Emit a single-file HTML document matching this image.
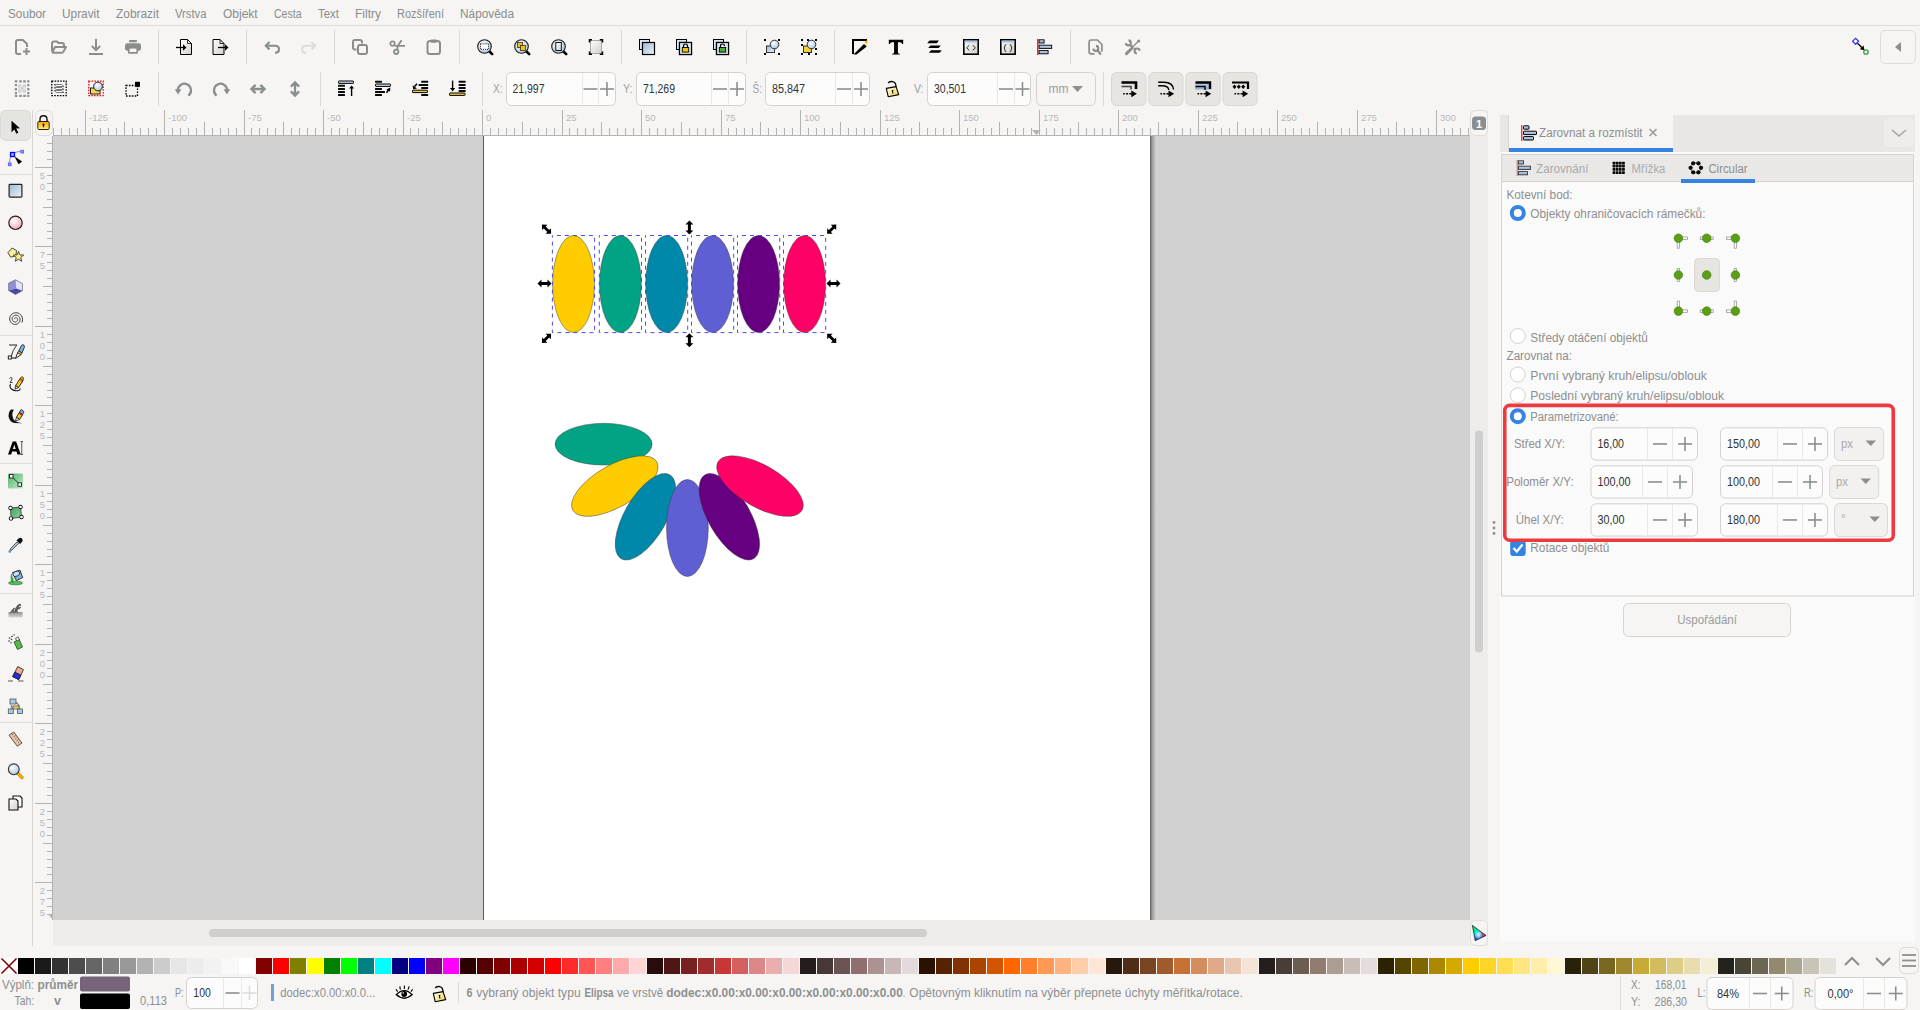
<!DOCTYPE html><html><head><meta charset="utf-8"><style>html,body{margin:0;padding:0;width:1920px;height:1010px;overflow:hidden;background:#f6f5f4}svg{display:block;font-family:"Liberation Sans",sans-serif}text{white-space:pre}</style></head><body><svg width="1920" height="1010" viewBox="0 0 1920 1010"><rect x="0" y="0" width="1920" height="1010" fill="#f6f5f4" />
<text x="8" y="18" font-size="12" fill="#8a8c8c" textLength="38" lengthAdjust="spacingAndGlyphs" >Soubor</text>
<text x="62" y="18" font-size="12" fill="#8a8c8c" textLength="37.5" lengthAdjust="spacingAndGlyphs" >Upravit</text>
<text x="116" y="18" font-size="12" fill="#8a8c8c" textLength="43" lengthAdjust="spacingAndGlyphs" >Zobrazit</text>
<text x="175" y="18" font-size="12" fill="#8a8c8c" textLength="31.5" lengthAdjust="spacingAndGlyphs" >Vrstva</text>
<text x="223" y="18" font-size="12" fill="#8a8c8c" >Objekt</text>
<text x="274" y="18" font-size="12" fill="#8a8c8c" textLength="27.5" lengthAdjust="spacingAndGlyphs" >Cesta</text>
<text x="318" y="18" font-size="12" fill="#8a8c8c" textLength="21" lengthAdjust="spacingAndGlyphs" >Text</text>
<text x="355" y="18" font-size="12" fill="#8a8c8c" >Filtry</text>
<text x="397" y="18" font-size="12" fill="#8a8c8c" textLength="47" lengthAdjust="spacingAndGlyphs" >Rozšíření</text>
<text x="460" y="18" font-size="12" fill="#8a8c8c" textLength="54" lengthAdjust="spacingAndGlyphs" >Nápověda</text>
<line x1="0" y1="25.5" x2="1920" y2="25.5" stroke="#dedbd7" stroke-width="1" />
<rect x="53" y="136" width="1417" height="784" fill="#d1d1d1" />
<rect x="484" y="136" width="666" height="784" fill="#ffffff" />
<line x1="483.5" y1="136" x2="483.5" y2="920" stroke="#5a5a5a" stroke-width="1" />
<defs><linearGradient id="shd" x1="0" x2="1" y1="0" y2="0"><stop offset="0" stop-color="#5c5c5c"/><stop offset="0.35" stop-color="#9a9a9a"/><stop offset="1" stop-color="#d1d1d1"/></linearGradient></defs>
<rect x="1150" y="136" width="6" height="784" fill="url(#shd)" />
<rect x="1470" y="110" width="18" height="836" fill="#eeedeb" />
<rect x="53" y="920" width="1417" height="26" fill="#eeedeb" />
<rect x="209" y="929" width="718" height="8" fill="#cfcfcf" rx="4" />
<rect x="1475" y="430.5" width="8" height="222" fill="#cfcfcf" rx="4" />
<rect x="53" y="110" width="1417" height="26" fill="#f6f5f4" />
<line x1="53" y1="135.5" x2="1470" y2="135.5" stroke="#b3b3b3" stroke-width="1" />
<line x1="53.5" y1="128" x2="53.5" y2="135" stroke="#b3b3b3" stroke-width="1" />
<line x1="61.5" y1="128" x2="61.5" y2="135" stroke="#b3b3b3" stroke-width="1" />
<line x1="69.5" y1="128" x2="69.5" y2="135" stroke="#b3b3b3" stroke-width="1" />
<line x1="77.5" y1="128" x2="77.5" y2="135" stroke="#b3b3b3" stroke-width="1" />
<line x1="85.5" y1="110" x2="85.5" y2="135" stroke="#b3b3b3" stroke-width="1" />
<text x="89.0" y="121" font-size="9.5" fill="#b8b8b8" >-125</text>
<line x1="92.5" y1="128" x2="92.5" y2="135" stroke="#b3b3b3" stroke-width="1" />
<line x1="100.5" y1="128" x2="100.5" y2="135" stroke="#b3b3b3" stroke-width="1" />
<line x1="108.5" y1="128" x2="108.5" y2="135" stroke="#b3b3b3" stroke-width="1" />
<line x1="116.5" y1="128" x2="116.5" y2="135" stroke="#b3b3b3" stroke-width="1" />
<line x1="124.5" y1="122" x2="124.5" y2="135" stroke="#b3b3b3" stroke-width="1" />
<line x1="132.5" y1="128" x2="132.5" y2="135" stroke="#b3b3b3" stroke-width="1" />
<line x1="140.5" y1="128" x2="140.5" y2="135" stroke="#b3b3b3" stroke-width="1" />
<line x1="148.5" y1="128" x2="148.5" y2="135" stroke="#b3b3b3" stroke-width="1" />
<line x1="156.5" y1="128" x2="156.5" y2="135" stroke="#b3b3b3" stroke-width="1" />
<line x1="164.5" y1="110" x2="164.5" y2="135" stroke="#b3b3b3" stroke-width="1" />
<text x="168.0" y="121" font-size="9.5" fill="#b8b8b8" >-100</text>
<line x1="172.5" y1="128" x2="172.5" y2="135" stroke="#b3b3b3" stroke-width="1" />
<line x1="180.5" y1="128" x2="180.5" y2="135" stroke="#b3b3b3" stroke-width="1" />
<line x1="188.5" y1="128" x2="188.5" y2="135" stroke="#b3b3b3" stroke-width="1" />
<line x1="196.5" y1="128" x2="196.5" y2="135" stroke="#b3b3b3" stroke-width="1" />
<line x1="204.5" y1="122" x2="204.5" y2="135" stroke="#b3b3b3" stroke-width="1" />
<line x1="212.5" y1="128" x2="212.5" y2="135" stroke="#b3b3b3" stroke-width="1" />
<line x1="220.5" y1="128" x2="220.5" y2="135" stroke="#b3b3b3" stroke-width="1" />
<line x1="228.5" y1="128" x2="228.5" y2="135" stroke="#b3b3b3" stroke-width="1" />
<line x1="236.5" y1="128" x2="236.5" y2="135" stroke="#b3b3b3" stroke-width="1" />
<line x1="244.5" y1="110" x2="244.5" y2="135" stroke="#b3b3b3" stroke-width="1" />
<text x="248.0" y="121" font-size="9.5" fill="#b8b8b8" >-75</text>
<line x1="251.5" y1="128" x2="251.5" y2="135" stroke="#b3b3b3" stroke-width="1" />
<line x1="259.5" y1="128" x2="259.5" y2="135" stroke="#b3b3b3" stroke-width="1" />
<line x1="267.5" y1="128" x2="267.5" y2="135" stroke="#b3b3b3" stroke-width="1" />
<line x1="275.5" y1="128" x2="275.5" y2="135" stroke="#b3b3b3" stroke-width="1" />
<line x1="283.5" y1="122" x2="283.5" y2="135" stroke="#b3b3b3" stroke-width="1" />
<line x1="291.5" y1="128" x2="291.5" y2="135" stroke="#b3b3b3" stroke-width="1" />
<line x1="299.5" y1="128" x2="299.5" y2="135" stroke="#b3b3b3" stroke-width="1" />
<line x1="307.5" y1="128" x2="307.5" y2="135" stroke="#b3b3b3" stroke-width="1" />
<line x1="315.5" y1="128" x2="315.5" y2="135" stroke="#b3b3b3" stroke-width="1" />
<line x1="323.5" y1="110" x2="323.5" y2="135" stroke="#b3b3b3" stroke-width="1" />
<text x="327.0" y="121" font-size="9.5" fill="#b8b8b8" >-50</text>
<line x1="331.5" y1="128" x2="331.5" y2="135" stroke="#b3b3b3" stroke-width="1" />
<line x1="339.5" y1="128" x2="339.5" y2="135" stroke="#b3b3b3" stroke-width="1" />
<line x1="347.5" y1="128" x2="347.5" y2="135" stroke="#b3b3b3" stroke-width="1" />
<line x1="355.5" y1="128" x2="355.5" y2="135" stroke="#b3b3b3" stroke-width="1" />
<line x1="363.5" y1="122" x2="363.5" y2="135" stroke="#b3b3b3" stroke-width="1" />
<line x1="371.5" y1="128" x2="371.5" y2="135" stroke="#b3b3b3" stroke-width="1" />
<line x1="379.5" y1="128" x2="379.5" y2="135" stroke="#b3b3b3" stroke-width="1" />
<line x1="387.5" y1="128" x2="387.5" y2="135" stroke="#b3b3b3" stroke-width="1" />
<line x1="395.5" y1="128" x2="395.5" y2="135" stroke="#b3b3b3" stroke-width="1" />
<line x1="403.5" y1="110" x2="403.5" y2="135" stroke="#b3b3b3" stroke-width="1" />
<text x="407.0" y="121" font-size="9.5" fill="#b8b8b8" >-25</text>
<line x1="410.5" y1="128" x2="410.5" y2="135" stroke="#b3b3b3" stroke-width="1" />
<line x1="418.5" y1="128" x2="418.5" y2="135" stroke="#b3b3b3" stroke-width="1" />
<line x1="426.5" y1="128" x2="426.5" y2="135" stroke="#b3b3b3" stroke-width="1" />
<line x1="434.5" y1="128" x2="434.5" y2="135" stroke="#b3b3b3" stroke-width="1" />
<line x1="442.5" y1="122" x2="442.5" y2="135" stroke="#b3b3b3" stroke-width="1" />
<line x1="450.5" y1="128" x2="450.5" y2="135" stroke="#b3b3b3" stroke-width="1" />
<line x1="458.5" y1="128" x2="458.5" y2="135" stroke="#b3b3b3" stroke-width="1" />
<line x1="466.5" y1="128" x2="466.5" y2="135" stroke="#b3b3b3" stroke-width="1" />
<line x1="474.5" y1="128" x2="474.5" y2="135" stroke="#b3b3b3" stroke-width="1" />
<line x1="482.5" y1="110" x2="482.5" y2="135" stroke="#b3b3b3" stroke-width="1" />
<text x="486.0" y="121" font-size="9.5" fill="#b8b8b8" >0</text>
<line x1="490.5" y1="128" x2="490.5" y2="135" stroke="#b3b3b3" stroke-width="1" />
<line x1="498.5" y1="128" x2="498.5" y2="135" stroke="#b3b3b3" stroke-width="1" />
<line x1="506.5" y1="128" x2="506.5" y2="135" stroke="#b3b3b3" stroke-width="1" />
<line x1="514.5" y1="128" x2="514.5" y2="135" stroke="#b3b3b3" stroke-width="1" />
<line x1="522.5" y1="122" x2="522.5" y2="135" stroke="#b3b3b3" stroke-width="1" />
<line x1="530.5" y1="128" x2="530.5" y2="135" stroke="#b3b3b3" stroke-width="1" />
<line x1="538.5" y1="128" x2="538.5" y2="135" stroke="#b3b3b3" stroke-width="1" />
<line x1="546.5" y1="128" x2="546.5" y2="135" stroke="#b3b3b3" stroke-width="1" />
<line x1="554.5" y1="128" x2="554.5" y2="135" stroke="#b3b3b3" stroke-width="1" />
<line x1="562.5" y1="110" x2="562.5" y2="135" stroke="#b3b3b3" stroke-width="1" />
<text x="566.0" y="121" font-size="9.5" fill="#b8b8b8" >25</text>
<line x1="569.5" y1="128" x2="569.5" y2="135" stroke="#b3b3b3" stroke-width="1" />
<line x1="577.5" y1="128" x2="577.5" y2="135" stroke="#b3b3b3" stroke-width="1" />
<line x1="585.5" y1="128" x2="585.5" y2="135" stroke="#b3b3b3" stroke-width="1" />
<line x1="593.5" y1="128" x2="593.5" y2="135" stroke="#b3b3b3" stroke-width="1" />
<line x1="601.5" y1="122" x2="601.5" y2="135" stroke="#b3b3b3" stroke-width="1" />
<line x1="609.5" y1="128" x2="609.5" y2="135" stroke="#b3b3b3" stroke-width="1" />
<line x1="617.5" y1="128" x2="617.5" y2="135" stroke="#b3b3b3" stroke-width="1" />
<line x1="625.5" y1="128" x2="625.5" y2="135" stroke="#b3b3b3" stroke-width="1" />
<line x1="633.5" y1="128" x2="633.5" y2="135" stroke="#b3b3b3" stroke-width="1" />
<line x1="641.5" y1="110" x2="641.5" y2="135" stroke="#b3b3b3" stroke-width="1" />
<text x="645.0" y="121" font-size="9.5" fill="#b8b8b8" >50</text>
<line x1="649.5" y1="128" x2="649.5" y2="135" stroke="#b3b3b3" stroke-width="1" />
<line x1="657.5" y1="128" x2="657.5" y2="135" stroke="#b3b3b3" stroke-width="1" />
<line x1="665.5" y1="128" x2="665.5" y2="135" stroke="#b3b3b3" stroke-width="1" />
<line x1="673.5" y1="128" x2="673.5" y2="135" stroke="#b3b3b3" stroke-width="1" />
<line x1="681.5" y1="122" x2="681.5" y2="135" stroke="#b3b3b3" stroke-width="1" />
<line x1="689.5" y1="128" x2="689.5" y2="135" stroke="#b3b3b3" stroke-width="1" />
<line x1="697.5" y1="128" x2="697.5" y2="135" stroke="#b3b3b3" stroke-width="1" />
<line x1="705.5" y1="128" x2="705.5" y2="135" stroke="#b3b3b3" stroke-width="1" />
<line x1="713.5" y1="128" x2="713.5" y2="135" stroke="#b3b3b3" stroke-width="1" />
<line x1="721.5" y1="110" x2="721.5" y2="135" stroke="#b3b3b3" stroke-width="1" />
<text x="725.0" y="121" font-size="9.5" fill="#b8b8b8" >75</text>
<line x1="728.5" y1="128" x2="728.5" y2="135" stroke="#b3b3b3" stroke-width="1" />
<line x1="736.5" y1="128" x2="736.5" y2="135" stroke="#b3b3b3" stroke-width="1" />
<line x1="744.5" y1="128" x2="744.5" y2="135" stroke="#b3b3b3" stroke-width="1" />
<line x1="752.5" y1="128" x2="752.5" y2="135" stroke="#b3b3b3" stroke-width="1" />
<line x1="760.5" y1="122" x2="760.5" y2="135" stroke="#b3b3b3" stroke-width="1" />
<line x1="768.5" y1="128" x2="768.5" y2="135" stroke="#b3b3b3" stroke-width="1" />
<line x1="776.5" y1="128" x2="776.5" y2="135" stroke="#b3b3b3" stroke-width="1" />
<line x1="784.5" y1="128" x2="784.5" y2="135" stroke="#b3b3b3" stroke-width="1" />
<line x1="792.5" y1="128" x2="792.5" y2="135" stroke="#b3b3b3" stroke-width="1" />
<line x1="800.5" y1="110" x2="800.5" y2="135" stroke="#b3b3b3" stroke-width="1" />
<text x="804.0" y="121" font-size="9.5" fill="#b8b8b8" >100</text>
<line x1="808.5" y1="128" x2="808.5" y2="135" stroke="#b3b3b3" stroke-width="1" />
<line x1="816.5" y1="128" x2="816.5" y2="135" stroke="#b3b3b3" stroke-width="1" />
<line x1="824.5" y1="128" x2="824.5" y2="135" stroke="#b3b3b3" stroke-width="1" />
<line x1="832.5" y1="128" x2="832.5" y2="135" stroke="#b3b3b3" stroke-width="1" />
<line x1="840.5" y1="122" x2="840.5" y2="135" stroke="#b3b3b3" stroke-width="1" />
<line x1="848.5" y1="128" x2="848.5" y2="135" stroke="#b3b3b3" stroke-width="1" />
<line x1="856.5" y1="128" x2="856.5" y2="135" stroke="#b3b3b3" stroke-width="1" />
<line x1="864.5" y1="128" x2="864.5" y2="135" stroke="#b3b3b3" stroke-width="1" />
<line x1="872.5" y1="128" x2="872.5" y2="135" stroke="#b3b3b3" stroke-width="1" />
<line x1="880.5" y1="110" x2="880.5" y2="135" stroke="#b3b3b3" stroke-width="1" />
<text x="884.0" y="121" font-size="9.5" fill="#b8b8b8" >125</text>
<line x1="887.5" y1="128" x2="887.5" y2="135" stroke="#b3b3b3" stroke-width="1" />
<line x1="895.5" y1="128" x2="895.5" y2="135" stroke="#b3b3b3" stroke-width="1" />
<line x1="903.5" y1="128" x2="903.5" y2="135" stroke="#b3b3b3" stroke-width="1" />
<line x1="911.5" y1="128" x2="911.5" y2="135" stroke="#b3b3b3" stroke-width="1" />
<line x1="919.5" y1="122" x2="919.5" y2="135" stroke="#b3b3b3" stroke-width="1" />
<line x1="927.5" y1="128" x2="927.5" y2="135" stroke="#b3b3b3" stroke-width="1" />
<line x1="935.5" y1="128" x2="935.5" y2="135" stroke="#b3b3b3" stroke-width="1" />
<line x1="943.5" y1="128" x2="943.5" y2="135" stroke="#b3b3b3" stroke-width="1" />
<line x1="951.5" y1="128" x2="951.5" y2="135" stroke="#b3b3b3" stroke-width="1" />
<line x1="959.5" y1="110" x2="959.5" y2="135" stroke="#b3b3b3" stroke-width="1" />
<text x="963.0" y="121" font-size="9.5" fill="#b8b8b8" >150</text>
<line x1="967.5" y1="128" x2="967.5" y2="135" stroke="#b3b3b3" stroke-width="1" />
<line x1="975.5" y1="128" x2="975.5" y2="135" stroke="#b3b3b3" stroke-width="1" />
<line x1="983.5" y1="128" x2="983.5" y2="135" stroke="#b3b3b3" stroke-width="1" />
<line x1="991.5" y1="128" x2="991.5" y2="135" stroke="#b3b3b3" stroke-width="1" />
<line x1="999.5" y1="122" x2="999.5" y2="135" stroke="#b3b3b3" stroke-width="1" />
<line x1="1007.5" y1="128" x2="1007.5" y2="135" stroke="#b3b3b3" stroke-width="1" />
<line x1="1015.5" y1="128" x2="1015.5" y2="135" stroke="#b3b3b3" stroke-width="1" />
<line x1="1023.5" y1="128" x2="1023.5" y2="135" stroke="#b3b3b3" stroke-width="1" />
<line x1="1031.5" y1="128" x2="1031.5" y2="135" stroke="#b3b3b3" stroke-width="1" />
<line x1="1039.5" y1="110" x2="1039.5" y2="135" stroke="#b3b3b3" stroke-width="1" />
<text x="1043.0" y="121" font-size="9.5" fill="#b8b8b8" >175</text>
<line x1="1046.5" y1="128" x2="1046.5" y2="135" stroke="#b3b3b3" stroke-width="1" />
<line x1="1054.5" y1="128" x2="1054.5" y2="135" stroke="#b3b3b3" stroke-width="1" />
<line x1="1062.5" y1="128" x2="1062.5" y2="135" stroke="#b3b3b3" stroke-width="1" />
<line x1="1070.5" y1="128" x2="1070.5" y2="135" stroke="#b3b3b3" stroke-width="1" />
<line x1="1078.5" y1="122" x2="1078.5" y2="135" stroke="#b3b3b3" stroke-width="1" />
<line x1="1086.5" y1="128" x2="1086.5" y2="135" stroke="#b3b3b3" stroke-width="1" />
<line x1="1094.5" y1="128" x2="1094.5" y2="135" stroke="#b3b3b3" stroke-width="1" />
<line x1="1102.5" y1="128" x2="1102.5" y2="135" stroke="#b3b3b3" stroke-width="1" />
<line x1="1110.5" y1="128" x2="1110.5" y2="135" stroke="#b3b3b3" stroke-width="1" />
<line x1="1118.5" y1="110" x2="1118.5" y2="135" stroke="#b3b3b3" stroke-width="1" />
<text x="1122.0" y="121" font-size="9.5" fill="#b8b8b8" >200</text>
<line x1="1126.5" y1="128" x2="1126.5" y2="135" stroke="#b3b3b3" stroke-width="1" />
<line x1="1134.5" y1="128" x2="1134.5" y2="135" stroke="#b3b3b3" stroke-width="1" />
<line x1="1142.5" y1="128" x2="1142.5" y2="135" stroke="#b3b3b3" stroke-width="1" />
<line x1="1150.5" y1="128" x2="1150.5" y2="135" stroke="#b3b3b3" stroke-width="1" />
<line x1="1158.5" y1="122" x2="1158.5" y2="135" stroke="#b3b3b3" stroke-width="1" />
<line x1="1166.5" y1="128" x2="1166.5" y2="135" stroke="#b3b3b3" stroke-width="1" />
<line x1="1174.5" y1="128" x2="1174.5" y2="135" stroke="#b3b3b3" stroke-width="1" />
<line x1="1182.5" y1="128" x2="1182.5" y2="135" stroke="#b3b3b3" stroke-width="1" />
<line x1="1190.5" y1="128" x2="1190.5" y2="135" stroke="#b3b3b3" stroke-width="1" />
<line x1="1198.5" y1="110" x2="1198.5" y2="135" stroke="#b3b3b3" stroke-width="1" />
<text x="1202.0" y="121" font-size="9.5" fill="#b8b8b8" >225</text>
<line x1="1205.5" y1="128" x2="1205.5" y2="135" stroke="#b3b3b3" stroke-width="1" />
<line x1="1213.5" y1="128" x2="1213.5" y2="135" stroke="#b3b3b3" stroke-width="1" />
<line x1="1221.5" y1="128" x2="1221.5" y2="135" stroke="#b3b3b3" stroke-width="1" />
<line x1="1229.5" y1="128" x2="1229.5" y2="135" stroke="#b3b3b3" stroke-width="1" />
<line x1="1237.5" y1="122" x2="1237.5" y2="135" stroke="#b3b3b3" stroke-width="1" />
<line x1="1245.5" y1="128" x2="1245.5" y2="135" stroke="#b3b3b3" stroke-width="1" />
<line x1="1253.5" y1="128" x2="1253.5" y2="135" stroke="#b3b3b3" stroke-width="1" />
<line x1="1261.5" y1="128" x2="1261.5" y2="135" stroke="#b3b3b3" stroke-width="1" />
<line x1="1269.5" y1="128" x2="1269.5" y2="135" stroke="#b3b3b3" stroke-width="1" />
<line x1="1277.5" y1="110" x2="1277.5" y2="135" stroke="#b3b3b3" stroke-width="1" />
<text x="1281.0" y="121" font-size="9.5" fill="#b8b8b8" >250</text>
<line x1="1285.5" y1="128" x2="1285.5" y2="135" stroke="#b3b3b3" stroke-width="1" />
<line x1="1293.5" y1="128" x2="1293.5" y2="135" stroke="#b3b3b3" stroke-width="1" />
<line x1="1301.5" y1="128" x2="1301.5" y2="135" stroke="#b3b3b3" stroke-width="1" />
<line x1="1309.5" y1="128" x2="1309.5" y2="135" stroke="#b3b3b3" stroke-width="1" />
<line x1="1317.5" y1="122" x2="1317.5" y2="135" stroke="#b3b3b3" stroke-width="1" />
<line x1="1325.5" y1="128" x2="1325.5" y2="135" stroke="#b3b3b3" stroke-width="1" />
<line x1="1333.5" y1="128" x2="1333.5" y2="135" stroke="#b3b3b3" stroke-width="1" />
<line x1="1341.5" y1="128" x2="1341.5" y2="135" stroke="#b3b3b3" stroke-width="1" />
<line x1="1349.5" y1="128" x2="1349.5" y2="135" stroke="#b3b3b3" stroke-width="1" />
<line x1="1357.5" y1="110" x2="1357.5" y2="135" stroke="#b3b3b3" stroke-width="1" />
<text x="1361.0" y="121" font-size="9.5" fill="#b8b8b8" >275</text>
<line x1="1364.5" y1="128" x2="1364.5" y2="135" stroke="#b3b3b3" stroke-width="1" />
<line x1="1372.5" y1="128" x2="1372.5" y2="135" stroke="#b3b3b3" stroke-width="1" />
<line x1="1380.5" y1="128" x2="1380.5" y2="135" stroke="#b3b3b3" stroke-width="1" />
<line x1="1388.5" y1="128" x2="1388.5" y2="135" stroke="#b3b3b3" stroke-width="1" />
<line x1="1396.5" y1="122" x2="1396.5" y2="135" stroke="#b3b3b3" stroke-width="1" />
<line x1="1404.5" y1="128" x2="1404.5" y2="135" stroke="#b3b3b3" stroke-width="1" />
<line x1="1412.5" y1="128" x2="1412.5" y2="135" stroke="#b3b3b3" stroke-width="1" />
<line x1="1420.5" y1="128" x2="1420.5" y2="135" stroke="#b3b3b3" stroke-width="1" />
<line x1="1428.5" y1="128" x2="1428.5" y2="135" stroke="#b3b3b3" stroke-width="1" />
<line x1="1436.5" y1="110" x2="1436.5" y2="135" stroke="#b3b3b3" stroke-width="1" />
<text x="1440.0" y="121" font-size="9.5" fill="#b8b8b8" >300</text>
<line x1="1444.5" y1="128" x2="1444.5" y2="135" stroke="#b3b3b3" stroke-width="1" />
<line x1="1452.5" y1="128" x2="1452.5" y2="135" stroke="#b3b3b3" stroke-width="1" />
<line x1="1460.5" y1="128" x2="1460.5" y2="135" stroke="#b3b3b3" stroke-width="1" />
<line x1="1468.5" y1="128" x2="1468.5" y2="135" stroke="#b3b3b3" stroke-width="1" />
<rect x="33" y="136" width="20" height="784" fill="#f6f5f4" />
<line x1="52.5" y1="136" x2="52.5" y2="920" stroke="#b3b3b3" stroke-width="1" />
<line x1="47" y1="143.5" x2="52" y2="143.5" stroke="#b3b3b3" stroke-width="1" />
<line x1="47" y1="151.5" x2="52" y2="151.5" stroke="#b3b3b3" stroke-width="1" />
<line x1="47" y1="159.5" x2="52" y2="159.5" stroke="#b3b3b3" stroke-width="1" />
<line x1="35" y1="167.5" x2="52" y2="167.5" stroke="#b3b3b3" stroke-width="1" />
<text x="42.5" y="178.5" font-size="9.5" fill="#b8b8b8" text-anchor="middle" >5</text>
<text x="42.5" y="189.5" font-size="9.5" fill="#b8b8b8" text-anchor="middle" >0</text>
<line x1="47" y1="175.5" x2="52" y2="175.5" stroke="#b3b3b3" stroke-width="1" />
<line x1="47" y1="183.5" x2="52" y2="183.5" stroke="#b3b3b3" stroke-width="1" />
<line x1="47" y1="191.5" x2="52" y2="191.5" stroke="#b3b3b3" stroke-width="1" />
<line x1="47" y1="199.5" x2="52" y2="199.5" stroke="#b3b3b3" stroke-width="1" />
<line x1="43" y1="207.5" x2="52" y2="207.5" stroke="#b3b3b3" stroke-width="1" />
<line x1="47" y1="215.5" x2="52" y2="215.5" stroke="#b3b3b3" stroke-width="1" />
<line x1="47" y1="223.5" x2="52" y2="223.5" stroke="#b3b3b3" stroke-width="1" />
<line x1="47" y1="231.5" x2="52" y2="231.5" stroke="#b3b3b3" stroke-width="1" />
<line x1="47" y1="238.5" x2="52" y2="238.5" stroke="#b3b3b3" stroke-width="1" />
<line x1="35" y1="246.5" x2="52" y2="246.5" stroke="#b3b3b3" stroke-width="1" />
<text x="42.5" y="257.5" font-size="9.5" fill="#b8b8b8" text-anchor="middle" >7</text>
<text x="42.5" y="268.5" font-size="9.5" fill="#b8b8b8" text-anchor="middle" >5</text>
<line x1="47" y1="254.5" x2="52" y2="254.5" stroke="#b3b3b3" stroke-width="1" />
<line x1="47" y1="262.5" x2="52" y2="262.5" stroke="#b3b3b3" stroke-width="1" />
<line x1="47" y1="270.5" x2="52" y2="270.5" stroke="#b3b3b3" stroke-width="1" />
<line x1="47" y1="278.5" x2="52" y2="278.5" stroke="#b3b3b3" stroke-width="1" />
<line x1="43" y1="286.5" x2="52" y2="286.5" stroke="#b3b3b3" stroke-width="1" />
<line x1="47" y1="294.5" x2="52" y2="294.5" stroke="#b3b3b3" stroke-width="1" />
<line x1="47" y1="302.5" x2="52" y2="302.5" stroke="#b3b3b3" stroke-width="1" />
<line x1="47" y1="310.5" x2="52" y2="310.5" stroke="#b3b3b3" stroke-width="1" />
<line x1="47" y1="318.5" x2="52" y2="318.5" stroke="#b3b3b3" stroke-width="1" />
<line x1="35" y1="326.5" x2="52" y2="326.5" stroke="#b3b3b3" stroke-width="1" />
<text x="42.5" y="337.5" font-size="9.5" fill="#b8b8b8" text-anchor="middle" >1</text>
<text x="42.5" y="348.5" font-size="9.5" fill="#b8b8b8" text-anchor="middle" >0</text>
<text x="42.5" y="359.5" font-size="9.5" fill="#b8b8b8" text-anchor="middle" >0</text>
<line x1="47" y1="334.5" x2="52" y2="334.5" stroke="#b3b3b3" stroke-width="1" />
<line x1="47" y1="342.5" x2="52" y2="342.5" stroke="#b3b3b3" stroke-width="1" />
<line x1="47" y1="350.5" x2="52" y2="350.5" stroke="#b3b3b3" stroke-width="1" />
<line x1="47" y1="358.5" x2="52" y2="358.5" stroke="#b3b3b3" stroke-width="1" />
<line x1="43" y1="366.5" x2="52" y2="366.5" stroke="#b3b3b3" stroke-width="1" />
<line x1="47" y1="374.5" x2="52" y2="374.5" stroke="#b3b3b3" stroke-width="1" />
<line x1="47" y1="382.5" x2="52" y2="382.5" stroke="#b3b3b3" stroke-width="1" />
<line x1="47" y1="390.5" x2="52" y2="390.5" stroke="#b3b3b3" stroke-width="1" />
<line x1="47" y1="397.5" x2="52" y2="397.5" stroke="#b3b3b3" stroke-width="1" />
<line x1="35" y1="405.5" x2="52" y2="405.5" stroke="#b3b3b3" stroke-width="1" />
<text x="42.5" y="416.5" font-size="9.5" fill="#b8b8b8" text-anchor="middle" >1</text>
<text x="42.5" y="427.5" font-size="9.5" fill="#b8b8b8" text-anchor="middle" >2</text>
<text x="42.5" y="438.5" font-size="9.5" fill="#b8b8b8" text-anchor="middle" >5</text>
<line x1="47" y1="413.5" x2="52" y2="413.5" stroke="#b3b3b3" stroke-width="1" />
<line x1="47" y1="421.5" x2="52" y2="421.5" stroke="#b3b3b3" stroke-width="1" />
<line x1="47" y1="429.5" x2="52" y2="429.5" stroke="#b3b3b3" stroke-width="1" />
<line x1="47" y1="437.5" x2="52" y2="437.5" stroke="#b3b3b3" stroke-width="1" />
<line x1="43" y1="445.5" x2="52" y2="445.5" stroke="#b3b3b3" stroke-width="1" />
<line x1="47" y1="453.5" x2="52" y2="453.5" stroke="#b3b3b3" stroke-width="1" />
<line x1="47" y1="461.5" x2="52" y2="461.5" stroke="#b3b3b3" stroke-width="1" />
<line x1="47" y1="469.5" x2="52" y2="469.5" stroke="#b3b3b3" stroke-width="1" />
<line x1="47" y1="477.5" x2="52" y2="477.5" stroke="#b3b3b3" stroke-width="1" />
<line x1="35" y1="485.5" x2="52" y2="485.5" stroke="#b3b3b3" stroke-width="1" />
<text x="42.5" y="496.5" font-size="9.5" fill="#b8b8b8" text-anchor="middle" >1</text>
<text x="42.5" y="507.5" font-size="9.5" fill="#b8b8b8" text-anchor="middle" >5</text>
<text x="42.5" y="518.5" font-size="9.5" fill="#b8b8b8" text-anchor="middle" >0</text>
<line x1="47" y1="493.5" x2="52" y2="493.5" stroke="#b3b3b3" stroke-width="1" />
<line x1="47" y1="501.5" x2="52" y2="501.5" stroke="#b3b3b3" stroke-width="1" />
<line x1="47" y1="509.5" x2="52" y2="509.5" stroke="#b3b3b3" stroke-width="1" />
<line x1="47" y1="517.5" x2="52" y2="517.5" stroke="#b3b3b3" stroke-width="1" />
<line x1="43" y1="525.5" x2="52" y2="525.5" stroke="#b3b3b3" stroke-width="1" />
<line x1="47" y1="533.5" x2="52" y2="533.5" stroke="#b3b3b3" stroke-width="1" />
<line x1="47" y1="541.5" x2="52" y2="541.5" stroke="#b3b3b3" stroke-width="1" />
<line x1="47" y1="549.5" x2="52" y2="549.5" stroke="#b3b3b3" stroke-width="1" />
<line x1="47" y1="556.5" x2="52" y2="556.5" stroke="#b3b3b3" stroke-width="1" />
<line x1="35" y1="564.5" x2="52" y2="564.5" stroke="#b3b3b3" stroke-width="1" />
<text x="42.5" y="575.5" font-size="9.5" fill="#b8b8b8" text-anchor="middle" >1</text>
<text x="42.5" y="586.5" font-size="9.5" fill="#b8b8b8" text-anchor="middle" >7</text>
<text x="42.5" y="597.5" font-size="9.5" fill="#b8b8b8" text-anchor="middle" >5</text>
<line x1="47" y1="572.5" x2="52" y2="572.5" stroke="#b3b3b3" stroke-width="1" />
<line x1="47" y1="580.5" x2="52" y2="580.5" stroke="#b3b3b3" stroke-width="1" />
<line x1="47" y1="588.5" x2="52" y2="588.5" stroke="#b3b3b3" stroke-width="1" />
<line x1="47" y1="596.5" x2="52" y2="596.5" stroke="#b3b3b3" stroke-width="1" />
<line x1="43" y1="604.5" x2="52" y2="604.5" stroke="#b3b3b3" stroke-width="1" />
<line x1="47" y1="612.5" x2="52" y2="612.5" stroke="#b3b3b3" stroke-width="1" />
<line x1="47" y1="620.5" x2="52" y2="620.5" stroke="#b3b3b3" stroke-width="1" />
<line x1="47" y1="628.5" x2="52" y2="628.5" stroke="#b3b3b3" stroke-width="1" />
<line x1="47" y1="636.5" x2="52" y2="636.5" stroke="#b3b3b3" stroke-width="1" />
<line x1="35" y1="644.5" x2="52" y2="644.5" stroke="#b3b3b3" stroke-width="1" />
<text x="42.5" y="655.5" font-size="9.5" fill="#b8b8b8" text-anchor="middle" >2</text>
<text x="42.5" y="666.5" font-size="9.5" fill="#b8b8b8" text-anchor="middle" >0</text>
<text x="42.5" y="677.5" font-size="9.5" fill="#b8b8b8" text-anchor="middle" >0</text>
<line x1="47" y1="652.5" x2="52" y2="652.5" stroke="#b3b3b3" stroke-width="1" />
<line x1="47" y1="660.5" x2="52" y2="660.5" stroke="#b3b3b3" stroke-width="1" />
<line x1="47" y1="668.5" x2="52" y2="668.5" stroke="#b3b3b3" stroke-width="1" />
<line x1="47" y1="676.5" x2="52" y2="676.5" stroke="#b3b3b3" stroke-width="1" />
<line x1="43" y1="684.5" x2="52" y2="684.5" stroke="#b3b3b3" stroke-width="1" />
<line x1="47" y1="692.5" x2="52" y2="692.5" stroke="#b3b3b3" stroke-width="1" />
<line x1="47" y1="700.5" x2="52" y2="700.5" stroke="#b3b3b3" stroke-width="1" />
<line x1="47" y1="708.5" x2="52" y2="708.5" stroke="#b3b3b3" stroke-width="1" />
<line x1="47" y1="715.5" x2="52" y2="715.5" stroke="#b3b3b3" stroke-width="1" />
<line x1="35" y1="723.5" x2="52" y2="723.5" stroke="#b3b3b3" stroke-width="1" />
<text x="42.5" y="734.5" font-size="9.5" fill="#b8b8b8" text-anchor="middle" >2</text>
<text x="42.5" y="745.5" font-size="9.5" fill="#b8b8b8" text-anchor="middle" >2</text>
<text x="42.5" y="756.5" font-size="9.5" fill="#b8b8b8" text-anchor="middle" >5</text>
<line x1="47" y1="731.5" x2="52" y2="731.5" stroke="#b3b3b3" stroke-width="1" />
<line x1="47" y1="739.5" x2="52" y2="739.5" stroke="#b3b3b3" stroke-width="1" />
<line x1="47" y1="747.5" x2="52" y2="747.5" stroke="#b3b3b3" stroke-width="1" />
<line x1="47" y1="755.5" x2="52" y2="755.5" stroke="#b3b3b3" stroke-width="1" />
<line x1="43" y1="763.5" x2="52" y2="763.5" stroke="#b3b3b3" stroke-width="1" />
<line x1="47" y1="771.5" x2="52" y2="771.5" stroke="#b3b3b3" stroke-width="1" />
<line x1="47" y1="779.5" x2="52" y2="779.5" stroke="#b3b3b3" stroke-width="1" />
<line x1="47" y1="787.5" x2="52" y2="787.5" stroke="#b3b3b3" stroke-width="1" />
<line x1="47" y1="795.5" x2="52" y2="795.5" stroke="#b3b3b3" stroke-width="1" />
<line x1="35" y1="803.5" x2="52" y2="803.5" stroke="#b3b3b3" stroke-width="1" />
<text x="42.5" y="814.5" font-size="9.5" fill="#b8b8b8" text-anchor="middle" >2</text>
<text x="42.5" y="825.5" font-size="9.5" fill="#b8b8b8" text-anchor="middle" >5</text>
<text x="42.5" y="836.5" font-size="9.5" fill="#b8b8b8" text-anchor="middle" >0</text>
<line x1="47" y1="811.5" x2="52" y2="811.5" stroke="#b3b3b3" stroke-width="1" />
<line x1="47" y1="819.5" x2="52" y2="819.5" stroke="#b3b3b3" stroke-width="1" />
<line x1="47" y1="827.5" x2="52" y2="827.5" stroke="#b3b3b3" stroke-width="1" />
<line x1="47" y1="835.5" x2="52" y2="835.5" stroke="#b3b3b3" stroke-width="1" />
<line x1="43" y1="843.5" x2="52" y2="843.5" stroke="#b3b3b3" stroke-width="1" />
<line x1="47" y1="851.5" x2="52" y2="851.5" stroke="#b3b3b3" stroke-width="1" />
<line x1="47" y1="859.5" x2="52" y2="859.5" stroke="#b3b3b3" stroke-width="1" />
<line x1="47" y1="867.5" x2="52" y2="867.5" stroke="#b3b3b3" stroke-width="1" />
<line x1="47" y1="874.5" x2="52" y2="874.5" stroke="#b3b3b3" stroke-width="1" />
<line x1="35" y1="882.5" x2="52" y2="882.5" stroke="#b3b3b3" stroke-width="1" />
<text x="42.5" y="893.5" font-size="9.5" fill="#b8b8b8" text-anchor="middle" >2</text>
<text x="42.5" y="904.5" font-size="9.5" fill="#b8b8b8" text-anchor="middle" >7</text>
<text x="42.5" y="915.5" font-size="9.5" fill="#b8b8b8" text-anchor="middle" >5</text>
<line x1="47" y1="890.5" x2="52" y2="890.5" stroke="#b3b3b3" stroke-width="1" />
<line x1="47" y1="898.5" x2="52" y2="898.5" stroke="#b3b3b3" stroke-width="1" />
<line x1="47" y1="906.5" x2="52" y2="906.5" stroke="#b3b3b3" stroke-width="1" />
<line x1="47" y1="914.5" x2="52" y2="914.5" stroke="#b3b3b3" stroke-width="1" />
<rect x="35.5" y="110.5" width="17" height="25" fill="#f6f5f4" stroke="#e2ddd9" stroke-width="1" rx="5" />
<rect x="1470.5" y="110.5" width="17" height="25" fill="#f6f5f4" stroke="#e2ddd9" stroke-width="1" rx="5" />
<rect x="1472" y="116.5" width="14" height="13.5" fill="#8b8e8f" rx="3.5" />
<text x="1479" y="127.6" font-size="11" fill="#ffffff" font-weight="bold" text-anchor="middle" >1</text>
<rect x="1470.5" y="920.5" width="17" height="25" fill="#f6f5f4" stroke="#e2ddd9" stroke-width="1" rx="5" />
<line x1="32.5" y1="110" x2="32.5" y2="946" stroke="#d9d6d2" stroke-width="1" />
<rect x="0.5" y="110.5" width="30" height="30" fill="#e4e4e1" stroke="#dcd8d3" stroke-width="1" rx="5" />
<line x1="0" y1="174.5" x2="32" y2="174.5" stroke="#e0ddd9" stroke-width="1" />
<line x1="0" y1="335.5" x2="32" y2="335.5" stroke="#e0ddd9" stroke-width="1" />
<line x1="0" y1="463.5" x2="32" y2="463.5" stroke="#e0ddd9" stroke-width="1" />
<line x1="0" y1="593.5" x2="32" y2="593.5" stroke="#e0ddd9" stroke-width="1" />
<line x1="0" y1="722.5" x2="32" y2="722.5" stroke="#e0ddd9" stroke-width="1" />
<rect x="1500" y="152" width="415" height="789" fill="#fafafa" />
<rect x="1500" y="115" width="415" height="37" fill="#e8e7e5" />
<rect x="1500" y="115" width="9" height="37" fill="#e8e7e5" />
<line x1="1508.5" y1="115" x2="1508.5" y2="152" stroke="#d9d4cf" stroke-width="1" />
<rect x="1509" y="115" width="164" height="37" fill="#f6f5f4" />
<rect x="1509" y="148" width="164" height="4" fill="#3584e4" />
<ellipse cx="573.5" cy="284.05" rx="20.9" ry="48.5" fill="#ffcc00" stroke="#3a3a3a" stroke-width="0.45"/>
<ellipse cx="620.4" cy="284.05" rx="20.9" ry="48.5" fill="#00a383" stroke="#3a3a3a" stroke-width="0.45"/>
<ellipse cx="666.6" cy="284.05" rx="20.9" ry="48.5" fill="#0088aa" stroke="#3a3a3a" stroke-width="0.45"/>
<ellipse cx="712.6" cy="284.05" rx="20.9" ry="48.5" fill="#5f5fd3" stroke="#3a3a3a" stroke-width="0.45"/>
<ellipse cx="758.6" cy="284.05" rx="20.9" ry="48.5" fill="#660080" stroke="#3a3a3a" stroke-width="0.45"/>
<ellipse cx="804.6" cy="284.05" rx="20.9" ry="48.5" fill="#ff0066" stroke="#3a3a3a" stroke-width="0.45"/>
<rect x="552.4" y="235.5" width="42.2" height="97.1" fill="none" stroke="#4d4ddc" stroke-width="1" stroke-dasharray="4,4" stroke-dashoffset="3.5"/>
<rect x="599.3" y="235.5" width="42.2" height="97.1" fill="none" stroke="#4d4ddc" stroke-width="1" stroke-dasharray="4,4" stroke-dashoffset="3.5"/>
<rect x="645.5" y="235.5" width="42.2" height="97.1" fill="none" stroke="#4d4ddc" stroke-width="1" stroke-dasharray="4,4" stroke-dashoffset="3.5"/>
<rect x="691.5" y="235.5" width="42.2" height="97.1" fill="none" stroke="#4d4ddc" stroke-width="1" stroke-dasharray="4,4" stroke-dashoffset="3.5"/>
<rect x="737.5" y="235.5" width="42.2" height="97.1" fill="none" stroke="#4d4ddc" stroke-width="1" stroke-dasharray="4,4" stroke-dashoffset="3.5"/>
<rect x="783.5" y="235.5" width="42.2" height="97.1" fill="none" stroke="#4d4ddc" stroke-width="1" stroke-dasharray="4,4" stroke-dashoffset="3.5"/>
<ellipse cx="0" cy="0" rx="20.9" ry="48.5" transform="translate(603.60,444.20) rotate(90)" fill="#00a383" stroke="#3a3a3a" stroke-width="0.45"/>
<ellipse cx="0" cy="0" rx="20.9" ry="48.5" transform="translate(614.83,486.10) rotate(60)" fill="#ffcc00" stroke="#3a3a3a" stroke-width="0.45"/>
<ellipse cx="0" cy="0" rx="20.9" ry="48.5" transform="translate(645.50,516.77) rotate(30)" fill="#0088aa" stroke="#3a3a3a" stroke-width="0.45"/>
<ellipse cx="0" cy="0" rx="20.9" ry="48.5" transform="translate(687.40,528.00) rotate(0)" fill="#5f5fd3" stroke="#3a3a3a" stroke-width="0.45"/>
<ellipse cx="0" cy="0" rx="20.9" ry="48.5" transform="translate(729.30,516.77) rotate(-30)" fill="#660080" stroke="#3a3a3a" stroke-width="0.45"/>
<ellipse cx="0" cy="0" rx="20.9" ry="48.5" transform="translate(759.97,486.10) rotate(-60)" fill="#ff0066" stroke="#3a3a3a" stroke-width="0.45"/>
<path transform="translate(544.5,283.5)" d="M-7,0 L-3,-4 L-3,-1.5 L3,-1.5 L3,-4 L7,0 L3,4 L3,1.5 L-3,1.5 L-3,4 Z" fill="#000"/>
<path transform="translate(833.5,283.5)" d="M-7,0 L-3,-4 L-3,-1.5 L3,-1.5 L3,-4 L7,0 L3,4 L3,1.5 L-3,1.5 L-3,4 Z" fill="#000"/>
<path transform="translate(689.4,227.5) rotate(90)" d="M-7,0 L-3,-4 L-3,-1.5 L3,-1.5 L3,-4 L7,0 L3,4 L3,1.5 L-3,1.5 L-3,4 Z" fill="#000"/>
<path transform="translate(689.4,340.3) rotate(90)" d="M-7,0 L-3,-4 L-3,-1.5 L3,-1.5 L3,-4 L7,0 L3,4 L3,1.5 L-3,1.5 L-3,4 Z" fill="#000"/>
<path transform="translate(546.5,229.2) rotate(45)" d="M-6.5,0 L-2.5,-3.8 L-2.5,-1.4 L2.5,-1.4 L2.5,-3.8 L6.5,0 L2.5,3.8 L2.5,1.4 L-2.5,1.4 L-2.5,3.8 Z" fill="#000"/>
<path transform="translate(831.7,229.2) rotate(-45)" d="M-6.5,0 L-2.5,-3.8 L-2.5,-1.4 L2.5,-1.4 L2.5,-3.8 L6.5,0 L2.5,3.8 L2.5,1.4 L-2.5,1.4 L-2.5,3.8 Z" fill="#000"/>
<path transform="translate(546.5,338.3) rotate(-45)" d="M-6.5,0 L-2.5,-3.8 L-2.5,-1.4 L2.5,-1.4 L2.5,-3.8 L6.5,0 L2.5,3.8 L2.5,1.4 L-2.5,1.4 L-2.5,3.8 Z" fill="#000"/>
<path transform="translate(831.7,338.3) rotate(45)" d="M-6.5,0 L-2.5,-3.8 L-2.5,-1.4 L2.5,-1.4 L2.5,-3.8 L6.5,0 L2.5,3.8 L2.5,1.4 L-2.5,1.4 L-2.5,3.8 Z" fill="#000"/>
<path d="M1032,130 L1041,130 L1036.5,135 Z" fill="#b3b3b3"/>
<path d="M48,914 L53,914 L53,920 Z" fill="#b3b3b3"/>
<rect x="1" y="958" width="16" height="16" fill="#ffffff" />
<line x1="1.5" y1="958.5" x2="16.5" y2="973.5" stroke="#800000" stroke-width="1.6" />
<line x1="16.5" y1="958.5" x2="1.5" y2="973.5" stroke="#800000" stroke-width="1.6" />
<rect x="18" y="958" width="16" height="16" fill="#000000" />
<rect x="35" y="958" width="16" height="16" fill="#1a1a1a" />
<rect x="52" y="958" width="16" height="16" fill="#333333" />
<rect x="69" y="958" width="16" height="16" fill="#4d4d4d" />
<rect x="86" y="958" width="16" height="16" fill="#666666" />
<rect x="103" y="958" width="16" height="16" fill="#808080" />
<rect x="120" y="958" width="16" height="16" fill="#999999" />
<rect x="137" y="958" width="16" height="16" fill="#b3b3b3" />
<rect x="154" y="958" width="16" height="16" fill="#cccccc" />
<rect x="171" y="958" width="16" height="16" fill="#e6e6e6" />
<rect x="188" y="958" width="16" height="16" fill="#ececec" />
<rect x="205" y="958" width="16" height="16" fill="#f2f2f2" />
<rect x="222" y="958" width="16" height="16" fill="#f9f9f9" />
<rect x="239" y="958" width="16" height="16" fill="#ffffff" />
<rect x="256" y="958" width="16" height="16" fill="#800000" />
<rect x="273" y="958" width="16" height="16" fill="#ff0000" />
<rect x="290" y="958" width="16" height="16" fill="#808000" />
<rect x="307" y="958" width="16" height="16" fill="#ffff00" />
<rect x="324" y="958" width="16" height="16" fill="#008000" />
<rect x="341" y="958" width="16" height="16" fill="#00ff00" />
<rect x="358" y="958" width="16" height="16" fill="#008080" />
<rect x="375" y="958" width="16" height="16" fill="#00ffff" />
<rect x="392" y="958" width="16" height="16" fill="#000080" />
<rect x="409" y="958" width="16" height="16" fill="#0000ff" />
<rect x="426" y="958" width="16" height="16" fill="#800080" />
<rect x="443" y="958" width="16" height="16" fill="#ff00ff" />
<rect x="460" y="958" width="16" height="16" fill="#2b0000" />
<rect x="477" y="958" width="16" height="16" fill="#550000" />
<rect x="494" y="958" width="16" height="16" fill="#800000" />
<rect x="511" y="958" width="16" height="16" fill="#aa0000" />
<rect x="528" y="958" width="16" height="16" fill="#d40000" />
<rect x="545" y="958" width="16" height="16" fill="#ff0000" />
<rect x="562" y="958" width="16" height="16" fill="#ff2a2a" />
<rect x="579" y="958" width="16" height="16" fill="#ff5555" />
<rect x="596" y="958" width="16" height="16" fill="#ff8080" />
<rect x="613" y="958" width="16" height="16" fill="#ffaaaa" />
<rect x="630" y="958" width="16" height="16" fill="#ffd5d5" />
<rect x="647" y="958" width="16" height="16" fill="#280b0b" />
<rect x="664" y="958" width="16" height="16" fill="#501616" />
<rect x="681" y="958" width="16" height="16" fill="#782121" />
<rect x="698" y="958" width="16" height="16" fill="#a02c2c" />
<rect x="715" y="958" width="16" height="16" fill="#c83737" />
<rect x="732" y="958" width="16" height="16" fill="#d35f5f" />
<rect x="749" y="958" width="16" height="16" fill="#de8787" />
<rect x="766" y="958" width="16" height="16" fill="#e9afaf" />
<rect x="783" y="958" width="16" height="16" fill="#f4d7d7" />
<rect x="800" y="958" width="16" height="16" fill="#241c1c" />
<rect x="817" y="958" width="16" height="16" fill="#483737" />
<rect x="834" y="958" width="16" height="16" fill="#6c5353" />
<rect x="851" y="958" width="16" height="16" fill="#916f6f" />
<rect x="868" y="958" width="16" height="16" fill="#ac9393" />
<rect x="885" y="958" width="16" height="16" fill="#c8b7b7" />
<rect x="902" y="958" width="16" height="16" fill="#e3dbdb" />
<rect x="919" y="958" width="16" height="16" fill="#2b1100" />
<rect x="936" y="958" width="16" height="16" fill="#552200" />
<rect x="953" y="958" width="16" height="16" fill="#803300" />
<rect x="970" y="958" width="16" height="16" fill="#aa4400" />
<rect x="987" y="958" width="16" height="16" fill="#d45500" />
<rect x="1004" y="958" width="16" height="16" fill="#ff6600" />
<rect x="1021" y="958" width="16" height="16" fill="#ff7f2a" />
<rect x="1038" y="958" width="16" height="16" fill="#ff9955" />
<rect x="1055" y="958" width="16" height="16" fill="#ffb380" />
<rect x="1072" y="958" width="16" height="16" fill="#ffccaa" />
<rect x="1089" y="958" width="16" height="16" fill="#ffe6d5" />
<rect x="1106" y="958" width="16" height="16" fill="#28170b" />
<rect x="1123" y="958" width="16" height="16" fill="#502d16" />
<rect x="1140" y="958" width="16" height="16" fill="#784421" />
<rect x="1157" y="958" width="16" height="16" fill="#a05a2c" />
<rect x="1174" y="958" width="16" height="16" fill="#c87137" />
<rect x="1191" y="958" width="16" height="16" fill="#d38d5f" />
<rect x="1208" y="958" width="16" height="16" fill="#deaa87" />
<rect x="1225" y="958" width="16" height="16" fill="#e9c6af" />
<rect x="1242" y="958" width="16" height="16" fill="#f4e3d7" />
<rect x="1259" y="958" width="16" height="16" fill="#241f1c" />
<rect x="1276" y="958" width="16" height="16" fill="#483e37" />
<rect x="1293" y="958" width="16" height="16" fill="#6c5d53" />
<rect x="1310" y="958" width="16" height="16" fill="#917c6f" />
<rect x="1327" y="958" width="16" height="16" fill="#ac9d93" />
<rect x="1344" y="958" width="16" height="16" fill="#c8beb7" />
<rect x="1361" y="958" width="16" height="16" fill="#e3dedb" />
<rect x="1378" y="958" width="16" height="16" fill="#2b2200" />
<rect x="1395" y="958" width="16" height="16" fill="#554400" />
<rect x="1412" y="958" width="16" height="16" fill="#806600" />
<rect x="1429" y="958" width="16" height="16" fill="#aa8800" />
<rect x="1446" y="958" width="16" height="16" fill="#d4aa00" />
<rect x="1463" y="958" width="16" height="16" fill="#ffcc00" />
<rect x="1480" y="958" width="16" height="16" fill="#ffd42a" />
<rect x="1497" y="958" width="16" height="16" fill="#ffdd55" />
<rect x="1514" y="958" width="16" height="16" fill="#ffe680" />
<rect x="1531" y="958" width="16" height="16" fill="#ffeeaa" />
<rect x="1548" y="958" width="16" height="16" fill="#fff6d5" />
<rect x="1565" y="958" width="16" height="16" fill="#28220b" />
<rect x="1582" y="958" width="16" height="16" fill="#504416" />
<rect x="1599" y="958" width="16" height="16" fill="#786721" />
<rect x="1616" y="958" width="16" height="16" fill="#a0892c" />
<rect x="1633" y="958" width="16" height="16" fill="#c8ab37" />
<rect x="1650" y="958" width="16" height="16" fill="#d3bc5f" />
<rect x="1667" y="958" width="16" height="16" fill="#decd87" />
<rect x="1684" y="958" width="16" height="16" fill="#e9ddaf" />
<rect x="1701" y="958" width="16" height="16" fill="#f4eed7" />
<rect x="1718" y="958" width="16" height="16" fill="#24221c" />
<rect x="1735" y="958" width="16" height="16" fill="#484537" />
<rect x="1752" y="958" width="16" height="16" fill="#6c6753" />
<rect x="1769" y="958" width="16" height="16" fill="#918a6f" />
<rect x="1786" y="958" width="16" height="16" fill="#aca793" />
<rect x="1803" y="958" width="16" height="16" fill="#c8c4b7" />
<rect x="1820" y="958" width="16" height="16" fill="#e3e2db" />
<path d="M1845,965 L1852,958 L1859,965" fill="none" stroke="#8d8f8f" stroke-width="2"/>
<path d="M1876,958 L1883,965 L1890,958" fill="none" stroke="#8d8f8f" stroke-width="2"/>
<rect x="1899.5" y="947.5" width="19" height="26" fill="#f6f5f4" stroke="#e0dbd6" stroke-width="1" rx="5" />
<line x1="1902" y1="955" x2="1916" y2="955" stroke="#8d8f8f" stroke-width="1.8" />
<line x1="1902" y1="960.5" x2="1916" y2="960.5" stroke="#8d8f8f" stroke-width="1.8" />
<line x1="1902" y1="966" x2="1916" y2="966" stroke="#8d8f8f" stroke-width="1.8" />
<text x="2" y="989" font-size="12" fill="#8d8f8f" textLength="32" lengthAdjust="spacingAndGlyphs" >Výplň:</text>
<text x="37.5" y="989" font-size="12" fill="#8d8f8f" font-weight="bold" textLength="40.5" lengthAdjust="spacingAndGlyphs" >průměr</text>
<text x="14.5" y="1005" font-size="12" fill="#8d8f8f" textLength="19.5" lengthAdjust="spacingAndGlyphs" >Tah:</text>
<text x="54" y="1005" font-size="12" fill="#8d8f8f" font-weight="bold" textLength="7" lengthAdjust="spacingAndGlyphs" >v</text>
<rect x="80" y="976.5" width="50" height="15" fill="#77647b" rx="2" />
<rect x="80" y="993.5" width="50" height="15.5" fill="#000000" rx="2" />
<text x="140" y="1005" font-size="12" fill="#8d8f8f" textLength="27" lengthAdjust="spacingAndGlyphs" >0,113</text>
<text x="175" y="997" font-size="12" fill="#8d8f8f" textLength="8.5" lengthAdjust="spacingAndGlyphs" >P:</text>
<rect x="186.5" y="977.5" width="71" height="31" fill="#fcfcfc" stroke="#d6d1cd" stroke-width="1" rx="5" />
<line x1="223.5" y1="978" x2="223.5" y2="1008" stroke="#ebe9e6" stroke-width="1" />
<line x1="241.5" y1="978" x2="241.5" y2="1008" stroke="#ebe9e6" stroke-width="1" />
<line x1="225.5" y1="993.0" x2="239.5" y2="993.0" stroke="#8d8f8f" stroke-width="1.6" />
<line x1="242.5" y1="993.0" x2="256.5" y2="993.0" stroke="#dcdcdc" stroke-width="1.6" />
<line x1="249.5" y1="986.0" x2="249.5" y2="1000.0" stroke="#dcdcdc" stroke-width="1.6" />
<text x="193.3" y="997.3" font-size="12" fill="#2e3436" textLength="17.5" lengthAdjust="spacingAndGlyphs" >100</text>
<rect x="271" y="984" width="3" height="17" fill="#6f9fd8" />
<text x="280.3" y="997" font-size="12" fill="#8d8f8f" textLength="95" lengthAdjust="spacingAndGlyphs" >dodec:x0.00:x0.0...</text>
<line x1="458.5" y1="982" x2="458.5" y2="1003" stroke="#dedbd7" stroke-width="1" />
<text x="466.5" y="997" font-size="12" fill="#8d8f8f" font-weight="bold" textLength="6" lengthAdjust="spacingAndGlyphs" >6</text>
<text x="476.25" y="997" font-size="12" fill="#8d8f8f" textLength="104.4" lengthAdjust="spacingAndGlyphs" >vybraný objekt typu</text>
<text x="584.4" y="997" font-size="12" fill="#8d8f8f" font-weight="bold" textLength="29.1" lengthAdjust="spacingAndGlyphs" >Elipsa</text>
<text x="616.9" y="997" font-size="12" fill="#8d8f8f" textLength="46.2" lengthAdjust="spacingAndGlyphs" >ve vrstvě</text>
<text x="666.25" y="997" font-size="12" fill="#8d8f8f" font-weight="bold" textLength="236.5" lengthAdjust="spacingAndGlyphs" >dodec:x0.00:x0.00:x0.00:x0.00:x0.00:x0.00</text>
<text x="902.7" y="997" font-size="12" fill="#8d8f8f" textLength="2.5" lengthAdjust="spacingAndGlyphs" >.</text>
<text x="909.3" y="997" font-size="12" fill="#8d8f8f" >Opětovným kliknutím na výběr přepnete úchyty měřítka/rotace.</text>
<line x1="1620.5" y1="976" x2="1620.5" y2="1010" stroke="#dedbd7" stroke-width="1" />
<text x="1631" y="989" font-size="12" fill="#8d8f8f" textLength="9.5" lengthAdjust="spacingAndGlyphs" >X:</text>
<text x="1631" y="1006" font-size="12" fill="#8d8f8f" textLength="9.5" lengthAdjust="spacingAndGlyphs" >Y:</text>
<text x="1655" y="989" font-size="12" fill="#8d8f8f" textLength="31.5" lengthAdjust="spacingAndGlyphs" >168,01</text>
<text x="1654.5" y="1006" font-size="12" fill="#8d8f8f" textLength="32.5" lengthAdjust="spacingAndGlyphs" >286,30</text>
<text x="1697.5" y="997" font-size="12" fill="#8d8f8f" textLength="8" lengthAdjust="spacingAndGlyphs" >L:</text>
<rect x="1707.0" y="977.5" width="86.0" height="32" fill="#fcfcfc" stroke="#d6d1cd" stroke-width="1" rx="5" />
<line x1="1749.5" y1="978" x2="1749.5" y2="1009" stroke="#ebe9e6" stroke-width="1" />
<line x1="1770.5" y1="978" x2="1770.5" y2="1009" stroke="#ebe9e6" stroke-width="1" />
<line x1="1753.0" y1="993.5" x2="1767.0" y2="993.5" stroke="#8d8f8f" stroke-width="1.6" />
<line x1="1774.75" y1="993.5" x2="1788.75" y2="993.5" stroke="#8d8f8f" stroke-width="1.6" />
<line x1="1781.75" y1="986.5" x2="1781.75" y2="1000.5" stroke="#8d8f8f" stroke-width="1.6" />
<text x="1717" y="997.8" font-size="12" fill="#2e3436" textLength="22" lengthAdjust="spacingAndGlyphs" >84%</text>
<text x="1804" y="997" font-size="12" fill="#8d8f8f" textLength="9.5" lengthAdjust="spacingAndGlyphs" >R:</text>
<rect x="1815.0" y="977.5" width="92.0" height="32" fill="#fcfcfc" stroke="#d6d1cd" stroke-width="1" rx="5" />
<line x1="1863.5" y1="978" x2="1863.5" y2="1009" stroke="#ebe9e6" stroke-width="1" />
<line x1="1884.5" y1="978" x2="1884.5" y2="1009" stroke="#ebe9e6" stroke-width="1" />
<line x1="1867.0" y1="993.5" x2="1881.0" y2="993.5" stroke="#8d8f8f" stroke-width="1.6" />
<line x1="1888.75" y1="993.5" x2="1902.75" y2="993.5" stroke="#8d8f8f" stroke-width="1.6" />
<line x1="1895.75" y1="986.5" x2="1895.75" y2="1000.5" stroke="#8d8f8f" stroke-width="1.6" />
<text x="1827.5" y="997.8" font-size="12" fill="#2e3436" textLength="26" lengthAdjust="spacingAndGlyphs" >0,00°</text>
<line x1="158.5" y1="30" x2="158.5" y2="64" stroke="#dbd8d4" stroke-width="1" />
<line x1="246.5" y1="30" x2="246.5" y2="64" stroke="#dbd8d4" stroke-width="1" />
<line x1="334.5" y1="30" x2="334.5" y2="64" stroke="#dbd8d4" stroke-width="1" />
<line x1="459.5" y1="30" x2="459.5" y2="64" stroke="#dbd8d4" stroke-width="1" />
<line x1="621.5" y1="30" x2="621.5" y2="64" stroke="#dbd8d4" stroke-width="1" />
<line x1="746.5" y1="30" x2="746.5" y2="64" stroke="#dbd8d4" stroke-width="1" />
<line x1="834.5" y1="30" x2="834.5" y2="64" stroke="#dbd8d4" stroke-width="1" />
<line x1="1070.5" y1="30" x2="1070.5" y2="64" stroke="#dbd8d4" stroke-width="1" />
<line x1="158.5" y1="72" x2="158.5" y2="106" stroke="#dbd8d4" stroke-width="1" />
<line x1="320.5" y1="72" x2="320.5" y2="106" stroke="#dbd8d4" stroke-width="1" />
<line x1="482.5" y1="72" x2="482.5" y2="106" stroke="#dbd8d4" stroke-width="1" />
<line x1="1103.5" y1="72" x2="1103.5" y2="106" stroke="#dbd8d4" stroke-width="1" />
<text x="493" y="93" font-size="12" fill="#a0a2a2" textLength="9.5" lengthAdjust="spacingAndGlyphs" >X:</text>
<rect x="506.5" y="72.5" width="109" height="33" fill="#fcfcfc" stroke="#d6d1cd" stroke-width="1" rx="5" />
<line x1="582.5" y1="73" x2="582.5" y2="105" stroke="#ebe9e6" stroke-width="1" />
<line x1="598.5" y1="73" x2="598.5" y2="105" stroke="#ebe9e6" stroke-width="1" />
<line x1="583.5" y1="89.0" x2="597.5" y2="89.0" stroke="#8d8f8f" stroke-width="1.6" />
<line x1="600.0" y1="89.0" x2="614.0" y2="89.0" stroke="#8d8f8f" stroke-width="1.6" />
<line x1="607.0" y1="82.0" x2="607.0" y2="96.0" stroke="#8d8f8f" stroke-width="1.6" />
<text x="512.5" y="93.3" font-size="12" fill="#2e3436" textLength="32" lengthAdjust="spacingAndGlyphs" >21,997</text>
<text x="623" y="93" font-size="12" fill="#a0a2a2" textLength="9.5" lengthAdjust="spacingAndGlyphs" >Y:</text>
<rect x="636.5" y="72.5" width="109" height="33" fill="#fcfcfc" stroke="#d6d1cd" stroke-width="1" rx="5" />
<line x1="711.5" y1="73" x2="711.5" y2="105" stroke="#ebe9e6" stroke-width="1" />
<line x1="728.5" y1="73" x2="728.5" y2="105" stroke="#ebe9e6" stroke-width="1" />
<line x1="713.0" y1="89.0" x2="727.0" y2="89.0" stroke="#8d8f8f" stroke-width="1.6" />
<line x1="730.0" y1="89.0" x2="744.0" y2="89.0" stroke="#8d8f8f" stroke-width="1.6" />
<line x1="737.0" y1="82.0" x2="737.0" y2="96.0" stroke="#8d8f8f" stroke-width="1.6" />
<text x="643" y="93.3" font-size="12" fill="#2e3436" textLength="32" lengthAdjust="spacingAndGlyphs" >71,269</text>
<text x="752.5" y="93" font-size="12" fill="#a0a2a2" textLength="9.5" lengthAdjust="spacingAndGlyphs" >Š:</text>
<rect x="765.5" y="72.5" width="104" height="33" fill="#fcfcfc" stroke="#d6d1cd" stroke-width="1" rx="5" />
<line x1="835.5" y1="73" x2="835.5" y2="105" stroke="#ebe9e6" stroke-width="1" />
<line x1="852.5" y1="73" x2="852.5" y2="105" stroke="#ebe9e6" stroke-width="1" />
<line x1="837.0" y1="89.0" x2="851.0" y2="89.0" stroke="#8d8f8f" stroke-width="1.6" />
<line x1="854.0" y1="89.0" x2="868.0" y2="89.0" stroke="#8d8f8f" stroke-width="1.6" />
<line x1="861.0" y1="82.0" x2="861.0" y2="96.0" stroke="#8d8f8f" stroke-width="1.6" />
<text x="772" y="93.3" font-size="12" fill="#2e3436" textLength="33" lengthAdjust="spacingAndGlyphs" >85,847</text>
<text x="914" y="93" font-size="12" fill="#a0a2a2" textLength="9.5" lengthAdjust="spacingAndGlyphs" >V:</text>
<rect x="927.5" y="72.5" width="103" height="33" fill="#fcfcfc" stroke="#d6d1cd" stroke-width="1" rx="5" />
<line x1="997.5" y1="73" x2="997.5" y2="105" stroke="#ebe9e6" stroke-width="1" />
<line x1="1014.5" y1="73" x2="1014.5" y2="105" stroke="#ebe9e6" stroke-width="1" />
<line x1="999.0" y1="89.0" x2="1013.0" y2="89.0" stroke="#8d8f8f" stroke-width="1.6" />
<line x1="1015.5" y1="89.0" x2="1029.5" y2="89.0" stroke="#8d8f8f" stroke-width="1.6" />
<line x1="1022.5" y1="82.0" x2="1022.5" y2="96.0" stroke="#8d8f8f" stroke-width="1.6" />
<text x="934" y="93.3" font-size="12" fill="#2e3436" textLength="32" lengthAdjust="spacingAndGlyphs" >30,501</text>
<rect x="1036.5" y="72.5" width="59" height="33" fill="#f6f5f4" stroke="#d6d1cd" stroke-width="1" rx="5" />
<text x="1048.5" y="93" font-size="12" fill="#9a9c9c" >mm</text>
<path d="M1072,86 L1083,86 L1077.5,92 Z" fill="#8d8f8f"/>
<rect x="1111.5" y="72.5" width="34.5" height="33" fill="#e6e5e2" stroke="#dcd6d1" stroke-width="1" rx="5" />
<rect x="1148.8" y="72.5" width="34.200000000000045" height="33" fill="#e6e5e2" stroke="#dcd6d1" stroke-width="1" rx="5" />
<rect x="1185.8" y="72.5" width="34.40000000000009" height="33" fill="#e6e5e2" stroke="#dcd6d1" stroke-width="1" rx="5" />
<rect x="1223.1" y="72.5" width="34.0" height="33" fill="#e6e5e2" stroke="#dcd6d1" stroke-width="1" rx="5" />
<rect x="1880.5" y="30.5" width="35" height="33" fill="#f6f5f4" stroke="#e0dbd6" stroke-width="1" rx="5" />
<path d="M1901,42 L1901,52 L1895,47 Z" fill="#8d8f8f"/>
<text x="1539" y="137" font-size="12" fill="#8d8f8f" textLength="103.5" lengthAdjust="spacingAndGlyphs" >Zarovnat a rozmístit</text>
<path d="M1649.5,129 L1656.5,136 M1656.5,129 L1649.5,136" stroke="#9a9c9c" stroke-width="1.6"/>
<rect x="1884" y="118.5" width="30" height="28.5" fill="#eeedeb" rx="5" />
<path d="M1892,130 L1899,136 L1906,130" fill="none" stroke="#a4a6a6" stroke-width="1.6"/>
<rect x="1501.5" y="154.5" width="412" height="441.5" fill="#fafafa" stroke="#d5d1cc" stroke-width="1" />
<rect x="1502" y="155" width="411" height="26.5" fill="#e9e8e6" />
<line x1="1502" y1="181.5" x2="1913" y2="181.5" stroke="#d5d1cc" stroke-width="1" />
<text x="1536" y="173.2" font-size="12" fill="#a9abab" textLength="52.6" lengthAdjust="spacingAndGlyphs" >Zarovnání</text>
<text x="1631.5" y="173.2" font-size="12" fill="#a9abab" textLength="33.9" lengthAdjust="spacingAndGlyphs" >Mřížka</text>
<text x="1708.4" y="173.2" font-size="12" fill="#8d8f8f" textLength="39.2" lengthAdjust="spacingAndGlyphs" >Circular</text>
<rect x="1681" y="179" width="74" height="4" fill="#3584e4" />
<text x="1506.5" y="198.5" font-size="12" fill="#8d8f8f" textLength="66" lengthAdjust="spacingAndGlyphs" >Kotevní bod:</text>
<circle cx="1517.8" cy="213" r="6" fill="#ffffff" stroke="#3584e4" stroke-width="4"/>
<text x="1530.3" y="217.8" font-size="12" fill="#8d8f8f" textLength="175.2" lengthAdjust="spacingAndGlyphs" >Objekty ohraničovacích rámečků:</text>
<rect x="1694.5" y="258.5" width="25" height="33" fill="#e6e5e2" stroke="#dcd8d3" stroke-width="1" rx="4" />
<rect x="1678.4" y="237.0" width="9" height="2.4" fill="#fff" stroke="#8a8a8a" stroke-width="0.7"/>
<rect x="1677.2" y="238.2" width="2.4" height="10" fill="#fff" stroke="#8a8a8a" stroke-width="0.7"/>
<circle cx="1678.4" cy="238.2" r="4.3" fill="#5aa012" stroke="#3d7a0a" stroke-width="0.6"/>
<rect x="1700.2" y="237.0" width="13" height="2.4" fill="#fff" stroke="#8a8a8a" stroke-width="0.7"/>
<circle cx="1706.7" cy="238.2" r="4.3" fill="#5aa012" stroke="#3d7a0a" stroke-width="0.6"/>
<rect x="1726.4" y="237.0" width="9" height="2.4" fill="#fff" stroke="#8a8a8a" stroke-width="0.7"/>
<rect x="1734.2" y="238.2" width="2.4" height="10" fill="#fff" stroke="#8a8a8a" stroke-width="0.7"/>
<circle cx="1735.4" cy="238.2" r="4.3" fill="#5aa012" stroke="#3d7a0a" stroke-width="0.6"/>
<rect x="1677.2" y="268.5" width="2.4" height="13" fill="#fff" stroke="#8a8a8a" stroke-width="0.7"/>
<circle cx="1678.4" cy="275" r="4.3" fill="#5aa012" stroke="#3d7a0a" stroke-width="0.6"/>
<circle cx="1706.7" cy="275" r="4.3" fill="#5aa012" stroke="#3d7a0a" stroke-width="0.6"/>
<rect x="1734.2" y="268.5" width="2.4" height="13" fill="#fff" stroke="#8a8a8a" stroke-width="0.7"/>
<circle cx="1735.4" cy="275" r="4.3" fill="#5aa012" stroke="#3d7a0a" stroke-width="0.6"/>
<rect x="1678.4" y="309.90000000000003" width="9" height="2.4" fill="#fff" stroke="#8a8a8a" stroke-width="0.7"/>
<rect x="1677.2" y="301.1" width="2.4" height="10" fill="#fff" stroke="#8a8a8a" stroke-width="0.7"/>
<circle cx="1678.4" cy="311.1" r="4.3" fill="#5aa012" stroke="#3d7a0a" stroke-width="0.6"/>
<rect x="1700.2" y="309.90000000000003" width="13" height="2.4" fill="#fff" stroke="#8a8a8a" stroke-width="0.7"/>
<circle cx="1706.7" cy="311.1" r="4.3" fill="#5aa012" stroke="#3d7a0a" stroke-width="0.6"/>
<rect x="1726.4" y="309.90000000000003" width="9" height="2.4" fill="#fff" stroke="#8a8a8a" stroke-width="0.7"/>
<rect x="1734.2" y="301.1" width="2.4" height="10" fill="#fff" stroke="#8a8a8a" stroke-width="0.7"/>
<circle cx="1735.4" cy="311.1" r="4.3" fill="#5aa012" stroke="#3d7a0a" stroke-width="0.6"/>
<circle cx="1517.8" cy="336" r="7.5" fill="#ffffff" stroke="#d5d0cb" stroke-width="1"/>
<text x="1530.3" y="341.5" font-size="12" fill="#8d8f8f" textLength="117.5" lengthAdjust="spacingAndGlyphs" >Středy otáčení objektů</text>
<text x="1506.5" y="360" font-size="12" fill="#8d8f8f" textLength="65.5" lengthAdjust="spacingAndGlyphs" >Zarovnat na:</text>
<circle cx="1517.8" cy="374.5" r="7.5" fill="#ffffff" stroke="#d5d0cb" stroke-width="1"/>
<text x="1530.3" y="379.6" font-size="12" fill="#8d8f8f" textLength="176.5" lengthAdjust="spacingAndGlyphs" >První vybraný kruh/elipsu/oblouk</text>
<circle cx="1517.8" cy="395.3" r="7.5" fill="#ffffff" stroke="#d5d0cb" stroke-width="1"/>
<text x="1530.3" y="400.4" font-size="12" fill="#8d8f8f" textLength="193.8" lengthAdjust="spacingAndGlyphs" >Poslední vybraný kruh/elipsu/oblouk</text>
<circle cx="1517.8" cy="416.2" r="6" fill="#ffffff" stroke="#3584e4" stroke-width="4"/>
<text x="1530.3" y="421" font-size="12" fill="#8d8f8f" textLength="88.3" lengthAdjust="spacingAndGlyphs" >Parametrizované:</text>
<text x="1514" y="447.8" font-size="12" fill="#8d8f8f" textLength="51" lengthAdjust="spacingAndGlyphs" >Střed X/Y:</text>
<rect x="1591.0" y="427.8" width="106.5" height="32.30000000000001" fill="#fcfcfc" stroke="#d6d1cd" stroke-width="1" rx="5" />
<line x1="1647.5" y1="428.3" x2="1647.5" y2="459.6" stroke="#ebe9e6" stroke-width="1" />
<line x1="1672.5" y1="428.3" x2="1672.5" y2="459.6" stroke="#ebe9e6" stroke-width="1" />
<line x1="1653.0" y1="443.95000000000005" x2="1667.0" y2="443.95000000000005" stroke="#8d8f8f" stroke-width="1.6" />
<line x1="1678.0" y1="443.95000000000005" x2="1692.0" y2="443.95000000000005" stroke="#8d8f8f" stroke-width="1.6" />
<line x1="1685.0" y1="436.95000000000005" x2="1685.0" y2="450.95000000000005" stroke="#8d8f8f" stroke-width="1.6" />
<text x="1597.4" y="448.25000000000006" font-size="12" fill="#2e3436" textLength="26.6" lengthAdjust="spacingAndGlyphs" >16,00</text>
<rect x="1720.5" y="427.8" width="107" height="32.30000000000001" fill="#fcfcfc" stroke="#d6d1cd" stroke-width="1" rx="5" />
<line x1="1777.5" y1="428.3" x2="1777.5" y2="459.6" stroke="#ebe9e6" stroke-width="1" />
<line x1="1802.5" y1="428.3" x2="1802.5" y2="459.6" stroke="#ebe9e6" stroke-width="1" />
<line x1="1783.0" y1="443.95000000000005" x2="1797.0" y2="443.95000000000005" stroke="#8d8f8f" stroke-width="1.6" />
<line x1="1808.0" y1="443.95000000000005" x2="1822.0" y2="443.95000000000005" stroke="#8d8f8f" stroke-width="1.6" />
<line x1="1815.0" y1="436.95000000000005" x2="1815.0" y2="450.95000000000005" stroke="#8d8f8f" stroke-width="1.6" />
<text x="1727" y="448.25000000000006" font-size="12" fill="#2e3436" textLength="33" lengthAdjust="spacingAndGlyphs" >150,00</text>
<rect x="1834.5" y="427.5" width="49" height="33" fill="#f2f1ef" stroke="#dcd8d3" stroke-width="1" rx="5" />
<text x="1841" y="447.8" font-size="12" fill="#a9abab" textLength="12" lengthAdjust="spacingAndGlyphs" >px</text>
<path d="M1865.5,440.5 L1876,440.5 L1870.75,446 Z" fill="#8d8f8f"/>
<text x="1506.2" y="485.8" font-size="12" fill="#8d8f8f" textLength="67.4" lengthAdjust="spacingAndGlyphs" >Poloměr X/Y:</text>
<rect x="1591.0" y="465.8" width="101.5" height="32.30000000000001" fill="#fcfcfc" stroke="#d6d1cd" stroke-width="1" rx="5" />
<line x1="1642.5" y1="466.3" x2="1642.5" y2="497.6" stroke="#ebe9e6" stroke-width="1" />
<line x1="1667.5" y1="466.3" x2="1667.5" y2="497.6" stroke="#ebe9e6" stroke-width="1" />
<line x1="1648.0" y1="481.95000000000005" x2="1662.0" y2="481.95000000000005" stroke="#8d8f8f" stroke-width="1.6" />
<line x1="1673.0" y1="481.95000000000005" x2="1687.0" y2="481.95000000000005" stroke="#8d8f8f" stroke-width="1.6" />
<line x1="1680.0" y1="474.95000000000005" x2="1680.0" y2="488.95000000000005" stroke="#8d8f8f" stroke-width="1.6" />
<text x="1597.4" y="486.25000000000006" font-size="12" fill="#2e3436" textLength="33" lengthAdjust="spacingAndGlyphs" >100,00</text>
<rect x="1720.5" y="465.8" width="102" height="32.30000000000001" fill="#fcfcfc" stroke="#d6d1cd" stroke-width="1" rx="5" />
<line x1="1772.5" y1="466.3" x2="1772.5" y2="497.6" stroke="#ebe9e6" stroke-width="1" />
<line x1="1797.5" y1="466.3" x2="1797.5" y2="497.6" stroke="#ebe9e6" stroke-width="1" />
<line x1="1778.0" y1="481.95000000000005" x2="1792.0" y2="481.95000000000005" stroke="#8d8f8f" stroke-width="1.6" />
<line x1="1803.0" y1="481.95000000000005" x2="1817.0" y2="481.95000000000005" stroke="#8d8f8f" stroke-width="1.6" />
<line x1="1810.0" y1="474.95000000000005" x2="1810.0" y2="488.95000000000005" stroke="#8d8f8f" stroke-width="1.6" />
<text x="1727" y="486.25000000000006" font-size="12" fill="#2e3436" textLength="33" lengthAdjust="spacingAndGlyphs" >100,00</text>
<rect x="1829.7" y="465.5" width="49" height="33" fill="#f2f1ef" stroke="#dcd8d3" stroke-width="1" rx="5" />
<text x="1836" y="485.8" font-size="12" fill="#a9abab" textLength="12" lengthAdjust="spacingAndGlyphs" >px</text>
<path d="M1860.5,478.5 L1871,478.5 L1865.75,484 Z" fill="#8d8f8f"/>
<text x="1515.7" y="523.8" font-size="12" fill="#8d8f8f" textLength="48" lengthAdjust="spacingAndGlyphs" >Úhel X/Y:</text>
<rect x="1591.0" y="503.8" width="106.5" height="32.30000000000001" fill="#fcfcfc" stroke="#d6d1cd" stroke-width="1" rx="5" />
<line x1="1647.5" y1="504.3" x2="1647.5" y2="535.6" stroke="#ebe9e6" stroke-width="1" />
<line x1="1672.5" y1="504.3" x2="1672.5" y2="535.6" stroke="#ebe9e6" stroke-width="1" />
<line x1="1653.0" y1="519.95" x2="1667.0" y2="519.95" stroke="#8d8f8f" stroke-width="1.6" />
<line x1="1678.0" y1="519.95" x2="1692.0" y2="519.95" stroke="#8d8f8f" stroke-width="1.6" />
<line x1="1685.0" y1="512.95" x2="1685.0" y2="526.95" stroke="#8d8f8f" stroke-width="1.6" />
<text x="1597.4" y="524.25" font-size="12" fill="#2e3436" textLength="27" lengthAdjust="spacingAndGlyphs" >30,00</text>
<rect x="1720.5" y="503.8" width="107" height="32.30000000000001" fill="#fcfcfc" stroke="#d6d1cd" stroke-width="1" rx="5" />
<line x1="1777.5" y1="504.3" x2="1777.5" y2="535.6" stroke="#ebe9e6" stroke-width="1" />
<line x1="1802.5" y1="504.3" x2="1802.5" y2="535.6" stroke="#ebe9e6" stroke-width="1" />
<line x1="1783.0" y1="519.95" x2="1797.0" y2="519.95" stroke="#8d8f8f" stroke-width="1.6" />
<line x1="1808.0" y1="519.95" x2="1822.0" y2="519.95" stroke="#8d8f8f" stroke-width="1.6" />
<line x1="1815.0" y1="512.95" x2="1815.0" y2="526.95" stroke="#8d8f8f" stroke-width="1.6" />
<text x="1727" y="524.25" font-size="12" fill="#2e3436" textLength="33" lengthAdjust="spacingAndGlyphs" >180,00</text>
<rect x="1834.5" y="503.5" width="53" height="33" fill="#f2f1ef" stroke="#dcd8d3" stroke-width="1" rx="5" />
<text x="1841" y="522.5" font-size="12" fill="#a9abab" >°</text>
<path d="M1869.5,516.5 L1880,516.5 L1874.75,522 Z" fill="#8d8f8f"/>
<rect x="1510.2" y="540.5" width="15.5" height="15.5" fill="#3584e4" rx="3" />
<path d="M1513.5,548 L1516.8,551.5 L1522.5,544.5" fill="none" stroke="#fff" stroke-width="2.2"/>
<text x="1530.3" y="552" font-size="12" fill="#8d8f8f" textLength="79" lengthAdjust="spacingAndGlyphs" >Rotace objektů</text>
<rect x="1504.75" y="405.4" width="388.5" height="134.8" fill="none" stroke="#ec3a40" stroke-width="3.6" rx="5" />
<rect x="1623.5" y="603.5" width="167" height="33" fill="#f6f5f4" stroke="#d8d3ce" stroke-width="1" rx="5" />
<text x="1677.2" y="623.5" font-size="12" fill="#9a9c9c" textLength="59.8" lengthAdjust="spacingAndGlyphs" >Uspořádání</text>
<circle cx="1494" cy="522.5" r="1.4" fill="#8d8f8f"/>
<circle cx="1494" cy="528" r="1.4" fill="#8d8f8f"/>
<circle cx="1494" cy="533.5" r="1.4" fill="#8d8f8f"/>
<defs>
<linearGradient id="gBlue" x1="0" y1="0" x2="1" y2="1"><stop offset="0" stop-color="#9db8d6"/><stop offset="1" stop-color="#eef3f8"/></linearGradient>
<linearGradient id="gBlue2" x1="0" y1="0" x2="0" y2="1"><stop offset="0" stop-color="#c3d6ea"/><stop offset="1" stop-color="#8fb0d2"/></linearGradient>
<linearGradient id="gDoc" x1="0" y1="0" x2="1" y2="1"><stop offset="0" stop-color="#ffffff"/><stop offset="1" stop-color="#cfcfcb"/></linearGradient>
<radialGradient id="gLens" cx="0.4" cy="0.35" r="0.7"><stop offset="0" stop-color="#ffffff"/><stop offset="1" stop-color="#a9c2dc"/></radialGradient>
<linearGradient id="gGold" x1="0" y1="0" x2="0" y2="1"><stop offset="0" stop-color="#f7a400"/><stop offset="1" stop-color="#fff27a"/></linearGradient>
<radialGradient id="gPink" cx="0.4" cy="0.35" r="0.7"><stop offset="0" stop-color="#ffffff"/><stop offset="1" stop-color="#f4a6b0"/></radialGradient>
<linearGradient id="gGreen" x1="0" y1="0" x2="1" y2="1"><stop offset="0" stop-color="#4fb36a"/><stop offset="1" stop-color="#c4ebc9"/></linearGradient>
<linearGradient id="gGreen2" x1="0" y1="0" x2="1" y2="1"><stop offset="0" stop-color="#3ea05a"/><stop offset="1" stop-color="#8fd4a0"/></linearGradient>
<linearGradient id="gGreyFade" x1="0" y1="0" x2="0" y2="1"><stop offset="0" stop-color="#7a7a7a"/><stop offset="1" stop-color="#d5d5d5"/></linearGradient>
</defs>
<g transform="translate(14,39)"><path d="M7,15 H4 Q2,15 2,13 V3 Q2,1 4,1 H9 L13,5 V8" fill="none" stroke="#898d8e" stroke-width="2" stroke-linejoin="round"/><path d="M12.5,9 V16 M9,12.5 H16" stroke="#898d8e" stroke-width="2"/></g>
<g transform="translate(50.5,39)"><path d="M1.5,12.5 V4.5 Q1.5,2.5 3.5,2.5 H6.5 L8,4 H11.5 Q13.5,4 13.5,6 V7" fill="none" stroke="#898d8e" stroke-width="2" stroke-linejoin="round"/><path d="M2,13 L4.5,8 H15.5 L13,12.5 Q12.5,13.8 11,13.8 H2.5 Z" fill="none" stroke="#898d8e" stroke-width="2" stroke-linejoin="round"/></g>
<g transform="translate(88,39)"><path d="M8,0 V11 M3.8,7 L8,11.2 L12.2,7" fill="none" stroke="#898d8e" stroke-width="2"/><path d="M1,15 H15" stroke="#898d8e" stroke-width="2"/></g>
<g transform="translate(125,39)"><rect x="4" y="1" width="8" height="2.2" rx="0.8" fill="#898d8e"/><rect x="0" y="4.2" width="16" height="7.5" rx="2.2" fill="#898d8e"/><rect x="3" y="9" width="10" height="5.8" rx="1.2" fill="#898d8e"/><rect x="4.6" y="9.6" width="6.8" height="3.4" fill="#f6f5f4"/></g>
<g transform="translate(176,39)"><path d="M4.5,0.5 H11.5 L15.5,4.5 V15.5 H4.5 Z" fill="url(#gDoc)" stroke="#000" stroke-width="1"/><path d="M11.5,0.5 V4.5 H15.5" fill="none" stroke="#000" stroke-width="0.8"/><path d="M0,8.5 H8" stroke="#000" stroke-width="1.3"/><path d="M7,5.3 L10.5,8.5 L7,11.7 Z" fill="#000"/></g>
<g transform="translate(212.5,39)"><path d="M0.5,0.5 H7.5 L11.5,4.5 V15.5 H0.5 Z" fill="url(#gDoc)" stroke="#000" stroke-width="1"/><path d="M7.5,0.5 V4.5 H11.5" fill="none" stroke="#000" stroke-width="0.8"/><path d="M5.5,8.5 H13" stroke="#000" stroke-width="1.3"/><path d="M12.5,5.3 L16,8.5 L12.5,11.7 Z" fill="#000"/></g>
<g transform="translate(264,39)"><path d="M5.5,3 L1.8,6.8 L5.5,10.5" fill="none" stroke="#898d8e" stroke-width="2.1"/><path d="M2,6.8 H11 Q15,6.8 15,10.3 Q15,13.8 11.5,13.8 H11" fill="none" stroke="#898d8e" stroke-width="2.1"/></g>
<g transform="translate(301,39)"><g transform="translate(16,0) scale(-1,1)"><path d="M5.5,3 L1.8,6.8 L5.5,10.5" fill="none" stroke="#dedcd9" stroke-width="2.1"/><path d="M2,6.8 H11 Q15,6.8 15,10.3 Q15,13.8 11.5,13.8 H11" fill="none" stroke="#dedcd9" stroke-width="2.1"/></g></g>
<g transform="translate(352,39)"><path d="M4.5,10.5 H3 Q1,10.5 1,8.5 V3 Q1,1 3,1 H8 Q10,1 10,3 V4.5" fill="none" stroke="#898d8e" stroke-width="2"/><rect x="6" y="6" width="9" height="9" rx="2" fill="none" stroke="#898d8e" stroke-width="2"/></g>
<g transform="translate(389,39)"><circle cx="3.5" cy="4.6" r="2.2" fill="none" stroke="#898d8e" stroke-width="1.8"/><circle cx="7.2" cy="12.8" r="2.2" fill="none" stroke="#898d8e" stroke-width="1.8"/><path d="M5.8,6.9 H16 M8.2,10.6 L8.8,6.9 L12.6,1.2" fill="none" stroke="#898d8e" stroke-width="1.8"/></g>
<g transform="translate(426,39)"><rect x="1.5" y="2" width="12.5" height="13" rx="2.5" fill="none" stroke="#898d8e" stroke-width="2"/><rect x="4.5" y="0.5" width="6.5" height="3.2" rx="1" fill="#898d8e"/></g>
<g transform="translate(477,39)"><path d="M12,12 L15.2,15.2" stroke="#000" stroke-width="2.6" stroke-linecap="round"/><circle cx="7.5" cy="7.5" r="6.8" fill="url(#gLens)" stroke="#1b1b1b" stroke-width="1.1"/><rect x="3.5" y="4.8" width="8" height="5.5" fill="#fff" stroke="#000" stroke-width="0.9" stroke-dasharray="1,1"/></g>
<g transform="translate(514,39)"><path d="M12,12 L15.2,15.2" stroke="#000" stroke-width="2.6" stroke-linecap="round"/><circle cx="7.5" cy="7.5" r="6.8" fill="url(#gLens)" stroke="#1b1b1b" stroke-width="1.1"/><rect x="3.5" y="3.5" width="5" height="5" fill="#f4c000" stroke="#333" stroke-width="0.8"/><rect x="6.5" y="6.5" width="5" height="5" fill="#f4c000" stroke="#333" stroke-width="0.8"/></g>
<g transform="translate(551,39)"><path d="M12,12 L15.2,15.2" stroke="#000" stroke-width="2.6" stroke-linecap="round"/><circle cx="7.5" cy="7.5" r="6.8" fill="url(#gLens)" stroke="#1b1b1b" stroke-width="1.1"/><rect x="4.8" y="3.5" width="5.5" height="8" fill="url(#gDoc)" stroke="#000" stroke-width="0.9"/></g>
<g transform="translate(588,39)"><rect x="2.5" y="1.5" width="11" height="13" fill="url(#gDoc)" stroke="#9a9a9a" stroke-width="0.8"/><path d="M1.5,3.5 V0.8 H4 M11.8,0.8 H14.5 V3.5 M1.5,12.5 V15.2 H4 M11.8,15.2 H14.5 V12.5" fill="none" stroke="#000" stroke-width="1.5"/></g>
<g transform="translate(639,39)"><rect x="0.5" y="0.5" width="10" height="10" fill="#d9e5f1" stroke="#000" stroke-width="1"/><rect x="3.5" y="3.5" width="12" height="12" fill="url(#gBlue)" stroke="#000" stroke-width="1.2"/></g>
<g transform="translate(676,39)"><rect x="0.5" y="0.5" width="10" height="10" fill="#d9e5f1" stroke="#000" stroke-width="1"/><rect x="3.5" y="3.5" width="12" height="12" fill="url(#gBlue)" stroke="#000" stroke-width="1.2"/><rect x="3.5" y="3.5" width="12" height="12" fill="#dfe8f1" stroke="#000" stroke-width="1.2"/><path d="M7.5,8.5 V7 Q7.5,5 9.5,5 Q11.5,5 11.5,7 V8.5" fill="none" stroke="#000" stroke-width="1.2"/><rect x="6.3" y="8.5" width="6.4" height="4.6" fill="#f4c000" stroke="#000" stroke-width="0.9"/></g>
<g transform="translate(713,39)"><rect x="0.5" y="0.5" width="10" height="10" fill="#d9e5f1" stroke="#000" stroke-width="1"/><rect x="3.5" y="3.5" width="12" height="12" fill="url(#gBlue)" stroke="#000" stroke-width="1.2"/><rect x="3.5" y="3.5" width="12" height="12" fill="#dfe8f1" stroke="#000" stroke-width="1.2"/><path d="M7.5,8.5 V7 Q7.5,5 9.5,5 Q11.5,5 11.5,7" fill="none" stroke="#000" stroke-width="1.2"/><rect x="6.3" y="8.5" width="6.4" height="4.6" fill="#48a83a" stroke="#000" stroke-width="0.9"/></g>
<g transform="translate(764,39)"><rect x="0" y="0" width="2" height="2" fill="#000"/><rect x="14" y="0" width="2" height="2" fill="#000"/><rect x="0" y="14" width="2" height="2" fill="#000"/><rect x="14" y="14" width="2" height="2" fill="#000"/><rect x="2.5" y="7" width="8" height="6.5" fill="url(#gBlue)" stroke="#333" stroke-width="1"/><circle cx="10.5" cy="5.5" r="4.3" fill="url(#gLens)" stroke="#333" stroke-width="1"/></g>
<g transform="translate(801,39)"><rect x="0" y="0" width="2" height="2" fill="#000"/><rect x="14" y="0" width="2" height="2" fill="#000"/><rect x="0" y="14" width="2" height="2" fill="#000"/><rect x="14" y="14" width="2" height="2" fill="#000"/><rect x="0" y="5" width="2" height="2" fill="#000"/><rect x="14" y="9" width="2" height="2" fill="#000"/><rect x="7" y="14" width="2" height="2" fill="#000"/><rect x="6" y="0" width="2" height="2" fill="#000"/><rect x="2.5" y="7" width="8" height="6.5" fill="#f4d23c" stroke="#333" stroke-width="1"/><circle cx="10.5" cy="5.5" r="4.3" fill="url(#gLens)" stroke="#333" stroke-width="1"/></g>
<g transform="translate(852,39)"><path d="M1,15 V1 H15" fill="none" stroke="#000" stroke-width="2"/><path d="M1,1 H15 L1,15 Z" fill="#fff" opacity="0.0"/><path d="M1.5,15.5 L12,5 L14.8,7.6 L4.5,15.5 Z" fill="#000"/><path d="M12.5,3 L15.8,0.8 L14.8,5.6 Z" fill="#f2ad00"/></g>
<g transform="translate(888,39)"><path d="M0.8,0.8 H15.2 V5 H14.2 Q13.6,3.2 12,3.2 H9.9 V13.4 Q10.1,14.6 11.8,14.8 V15.6 H4.2 V14.8 Q5.9,14.6 6.1,13.4 V3.2 H4 Q2.4,3.2 1.8,5 H0.8 Z" fill="#000"/></g>
<g transform="translate(926,39)"><path d="M3.5,1.6 H13 L10.8,4.2 H1.2 Z M4.5,6.5 H14.8 L12.6,9 H2.2 Z M5,11.2 H15.8 L13.6,13.8 H2.8 Z" fill="#000"/></g>
<g transform="translate(963,39)"><rect x="0.8" y="0.8" width="14.4" height="14.4" fill="url(#gDoc)" stroke="#000" stroke-width="1.6"/><rect x="1.6" y="1.6" width="12.8" height="2" fill="#a8c3e3"/><path d="M6.3,6.2 L3.6,8.8 L6.3,11.4 M9.7,6.2 L12.4,8.8 L9.7,11.4" fill="none" stroke="#2a2a2a" stroke-width="1"/></g>
<g transform="translate(1000,39)"><rect x="0.8" y="0.8" width="14.4" height="14.4" fill="url(#gDoc)" stroke="#000" stroke-width="1.6"/><rect x="1.6" y="1.6" width="12.8" height="2" fill="#a8c3e3"/><path d="M6.2,5.5 Q4.8,5.5 4.8,7 V8 Q4.8,9 3.8,9 Q4.8,9 4.8,10 V11.2 Q4.8,12.6 6.2,12.6 M9.8,5.5 Q11.2,5.5 11.2,7 V8 Q11.2,9 12.2,9 Q11.2,9 11.2,10 V11.2 Q11.2,12.6 9.8,12.6" fill="none" stroke="#2a2a2a" stroke-width="1"/></g>
<g transform="translate(1036.5,39)"><rect x="0.6" y="0" width="1.4" height="16" fill="#d81e1e"/><rect x="2.6" y="0.8" width="5" height="3.2" fill="url(#gBlue2)" stroke="#000" stroke-width="0.9"/><rect x="2.6" y="6.2" width="12.6" height="3.2" fill="url(#gBlue2)" stroke="#000" stroke-width="0.9"/><rect x="2.6" y="11.6" width="9" height="3.2" fill="url(#gBlue2)" stroke="#000" stroke-width="0.9"/></g>
<g transform="translate(1088,39)"><path d="M6.5,14.8 H3.2 Q1.1,14.8 1.1,12.7 V3.1 Q1.1,1 3.2,1 H9.4 L13.9,5.5 V12.7" fill="none" stroke="#898d8e" stroke-width="1.7" stroke-linejoin="round"/><path d="M8.02,6.91 A2.5,2.5 0 1 1 5.31,9.62" fill="none" stroke="#898d8e" stroke-width="2.1"/><path d="M9.2,11 L12.8,15.5" stroke="#898d8e" stroke-width="2.3"/></g>
<g transform="translate(1124.5,39)"><path d="M14.3,1.8 L7.6,8.5" stroke="#898d8e" stroke-width="1.3"/><circle cx="14.2" cy="1.9" r="1.5" fill="#898d8e"/><path d="M7.6,9 L2,14.6" stroke="#898d8e" stroke-width="2.9" stroke-linecap="round"/><path d="M4.02,1.41 A2.5,2.5 0 1 1 1.31,4.12" fill="none" stroke="#898d8e" stroke-width="2.1"/><path d="M5.4,5.6 L8.2,8.2" stroke="#898d8e" stroke-width="2.2"/><path d="M12.38,14.49 A2.5,2.5 0 1 1 15.09,11.78" fill="none" stroke="#898d8e" stroke-width="2.1"/><path d="M9.6,9.2 L11,10.6" stroke="#898d8e" stroke-width="2.2"/></g>
<rect x="1853.5" y="39.2" width="4.2" height="4.2" fill="#fff" stroke="#3535ff" stroke-width="1.3" transform="rotate(45 1855.6 41.3)"/>
<path d="M1857.5,43.2 L1862.8,48.5" stroke="#000" stroke-width="1.3"/><path d="M1864.5,50.2 L1859.8,49.2 L1863.5,45.5 Z" fill="#000"/>
<circle cx="1866" cy="52" r="2.2" fill="#fff" stroke="#35a035" stroke-width="1.3"/>
<g transform="translate(14,80)"><rect x="4" y="4.5" width="8" height="8" fill="#e4e4e4"/><rect x="4" y="4.5" width="2.7" height="2.7" fill="#d0d0d0"/><rect x="9.3" y="4.5" width="2.7" height="2.7" fill="#d0d0d0"/><rect x="6.7" y="7.2" width="2.6" height="2.6" fill="#d0d0d0"/><rect x="4" y="9.8" width="2.7" height="2.7" fill="#d0d0d0"/><rect x="9.3" y="9.8" width="2.7" height="2.7" fill="#d0d0d0"/><path d="M0.8,1.3 h2.6 M5.2,1.3 h2.6 M9.2,1.3 h2.6 M13.2,1.3 h2.2 M0.8,15.8 h2.6 M5.2,15.8 h2.6 M9.2,15.8 h2.6 M13.2,15.8 h2.2" stroke="#8f8f8f" stroke-width="2.2"/><path d="M1.9,4 v2.2 M1.9,8 v2.4 M1.9,12 v2 M14.3,4 v2.2 M14.3,8 v2.4 M14.3,12 v2" stroke="#8f8f8f" stroke-width="2.2"/></g>
<g transform="translate(51,80)"><rect x="0.8" y="1.2" width="14.4" height="14.4" fill="none" stroke="#000" stroke-width="1.3" stroke-dasharray="1.6,1.2"/><path d="M3,4.5 H10.5 L13,6.5 H5.5 Z M3,7.5 H10.5 L13,9.5 H5.5 Z M3,10.5 H10.5 L13,12.5 H5.5 Z" fill="#fff" stroke="#555" stroke-width="0.8"/></g>
<g transform="translate(88,80)"><rect x="0.8" y="1.2" width="14.4" height="14.4" fill="none" stroke="#e01010" stroke-width="1.3" stroke-dasharray="1.6,1.2"/><rect x="2.5" y="8" width="9.5" height="6" fill="#f8d649" stroke="#222" stroke-width="1"/><circle cx="10" cy="6.5" r="4.4" fill="url(#gLens)" stroke="#222" stroke-width="1"/></g>
<g transform="translate(124.5,80)"><rect x="1.5" y="5.5" width="11.5" height="10.5" fill="none" stroke="#000" stroke-width="1.3" stroke-dasharray="1.6,1.3"/><rect x="10.5" y="1.8" width="5" height="5" fill="#000"/></g>
<g transform="translate(176,80.6)"><path d="M12.4,15 A6.6,6.6 0 1 0 1.8,9.6" fill="none" stroke="#898d8e" stroke-width="2.2"/><path d="M-1.2,8.6 L5.4,8.6 L2.1,13.9 Z" fill="#898d8e"/></g>
<g transform="translate(213,80.6)"><g transform="translate(16,0) scale(-1,1)"><path d="M12.4,15 A6.6,6.6 0 1 0 1.8,9.6" fill="none" stroke="#898d8e" stroke-width="2.2"/><path d="M-1.2,8.6 L5.4,8.6 L2.1,13.9 Z" fill="#898d8e"/></g></g>
<g transform="translate(250,81)"><path d="M1.5,8 H14.5 M5.6,3.9 L1.4,8 L5.6,12.1 M10.4,3.9 L14.6,8 L10.4,12.1" fill="none" stroke="#898d8e" stroke-width="2.3"/></g>
<g transform="translate(287,81)"><path d="M8,1.5 V14.5 M3.9,5.6 L8,1.4 L12.1,5.6 M3.9,10.4 L8,14.6 L12.1,10.4" fill="none" stroke="#898d8e" stroke-width="2.3"/></g>
<g transform="translate(338,80)"><rect x="0.5" y="1.0" width="15" height="2.4" rx="0.5" fill="#c6d8ea" stroke="#000" stroke-width="1.0"/><rect x="0" y="4.8" width="7" height="2.0" rx="0.5" fill="#0a0a0a"/><rect x="0" y="7.9" width="7" height="2.0" rx="0.5" fill="#0a0a0a"/><rect x="0" y="11" width="7" height="2.0" rx="0.5" fill="#0a0a0a"/><rect x="0" y="14.1" width="7" height="2.0" rx="0.5" fill="#0a0a0a"/><path d="M13.6,16 V7.6" stroke="#000" stroke-width="1.4"/><path d="M11,8.6 L13.6,5.5 L16.2,8.6 Z" fill="#000"/></g>
<g transform="translate(374.5,80)"><rect x="0.5" y="0.8" width="7" height="2.0" rx="0.5" fill="#0a0a0a"/><rect x="1.0" y="4.0" width="15" height="2.4" rx="0.5" fill="#c6d8ea" stroke="#000" stroke-width="1.0"/><rect x="0.5" y="7.9" width="7" height="2.0" rx="0.5" fill="#0a0a0a"/><rect x="0.5" y="11" width="10" height="2.0" rx="0.5" fill="#0a0a0a"/><rect x="0.5" y="14.1" width="7" height="2.0" rx="0.5" fill="#0a0a0a"/><path d="M12,12.8 L14.2,9.8" stroke="#000" stroke-width="1.5"/><path d="M11.8,9.6 L15.8,7.4 L15.6,11.6 Z" fill="#000"/></g>
<g transform="translate(412,80)"><rect x="9.2" y="0.8" width="7" height="2.0" rx="0.5" fill="#0a0a0a"/><rect x="6.6" y="3.9" width="9.6" height="2.0" rx="0.5" fill="#0a0a0a"/><rect x="9.2" y="7" width="7" height="2.0" rx="0.5" fill="#0a0a0a"/><rect x="0.5" y="10.200000000000001" width="15" height="2.4" rx="0.5" fill="#f5cd48" stroke="#000" stroke-width="1.0"/><rect x="9.2" y="14.1" width="7" height="2.0" rx="0.5" fill="#0a0a0a"/><path d="M5,3.8 L2.6,6.6" stroke="#000" stroke-width="1.5"/><path d="M0.6,5.2 L1.2,9.2 L5,8.4 Z" fill="#000"/></g>
<g transform="translate(449,80)"><rect x="9.6" y="0.8" width="7" height="2.0" rx="0.5" fill="#0a0a0a"/><rect x="9.6" y="3.9" width="7" height="2.0" rx="0.5" fill="#0a0a0a"/><rect x="9.6" y="7" width="7" height="2.0" rx="0.5" fill="#0a0a0a"/><rect x="9.6" y="10.1" width="7" height="2.0" rx="0.5" fill="#0a0a0a"/><rect x="0.5" y="13.0" width="15.5" height="2.4" rx="0.5" fill="#f5cd48" stroke="#000" stroke-width="1.0"/><path d="M3.6,0.6 V9" stroke="#000" stroke-width="1.4"/><path d="M1,8 L3.6,11.4 L6.2,8 Z" fill="#000"/></g>
<defs><linearGradient id="gLk" x1="0" y1="0" x2="1" y2="1"><stop offset="0" stop-color="#ffffff"/><stop offset="1" stop-color="#f2d23a"/></linearGradient></defs>
<path d="M895.9,87.2 Q896.4,82.4 892.6,81.6 Q889.6,81.1 888.2,83" fill="none" stroke="#000" stroke-width="1.3"/><path d="M886.3,88.4 L896.1,86.6 L898.7,94.6 L888.2,96.7 Z" fill="url(#gLk)" stroke="#000" stroke-width="1.1" stroke-linejoin="round"/><path d="M891.6,90.2 L893.6,89.8 L893,91.6 L893.5,93.4 L892.2,93.6 L892.1,91.8 Z" fill="#000"/>
<path d="M1123.2,93.8 h1.6 M1126.1000000000001,93.8 h2 M1129.3,93.8 h2.4" stroke="#000" stroke-width="1.5"/><path d="M1131.3,90.4 L1136.9,93.8 L1131.3,97.2 Z" fill="#000"/><path d="M1121.5,82.5 H1136 V89" fill="none" stroke="#000" stroke-width="2.6"/><path d="M1121.5,86.5 H1131 V89.5" fill="none" stroke="#444" stroke-width="1.6"/>
<path d="M1160.4,93.8 h1.6 M1163.3000000000002,93.8 h2 M1166.5,93.8 h2.4" stroke="#000" stroke-width="1.5"/><path d="M1168.5,90.4 L1174.1000000000001,93.8 L1168.5,97.2 Z" fill="#000"/><path d="M1158.2,82.2 H1164 Q1173,82.2 1173.5,89.5" fill="none" stroke="#000" stroke-width="1.4"/><path d="M1158.2,85.8 H1162 Q1168.5,85.8 1168.8,90" fill="none" stroke="#000" stroke-width="1.4"/>
<path d="M1197.5,93.8 h1.6 M1200.4,93.8 h2 M1203.6,93.8 h2.4" stroke="#000" stroke-width="1.5"/><path d="M1205.6,90.4 L1211.2,93.8 L1205.6,97.2 Z" fill="#000"/><rect x="1195" y="81.5" width="16" height="8" fill="url(#gBlue2)"/><path d="M1195.5,82.5 H1210 V89" fill="none" stroke="#000" stroke-width="2.4"/><path d="M1195.5,86.5 H1205 V90" fill="none" stroke="#000" stroke-width="1.4"/>
<path d="M1234.5,93.8 h1.6 M1237.4,93.8 h2 M1240.6,93.8 h2.4" stroke="#000" stroke-width="1.5"/><path d="M1242.6,90.4 L1248.2,93.8 L1242.6,97.2 Z" fill="#000"/><path d="M1232,82.5 H1248 V89" fill="none" stroke="#000" stroke-width="2.2"/><path d="M1232.5,86.8 L1234.5,84.6 L1236.5,86.8 L1234.5,89 Z M1236.8,86.8 L1238.8,84.6 L1240.8,86.8 L1238.8,89 Z M1241.2,86.8 L1243.2,84.6 L1245.2,86.8 L1243.2,89 Z" fill="#000"/>
<g transform="translate(7.5,118.7)"><path d="M4,2 V13.5 L6.8,10.8 L8.9,15 L10.8,14.1 L8.7,9.9 L12.5,9.6 Z" fill="#000"/></g>
<g transform="translate(7.5,149.4)"><path d="M7.4,3.2 Q10,2 13.1,2.2 M3,7.6 Q2,10 2.2,13.3" fill="none" stroke="#8c8c8c" stroke-width="1"/><rect x="3.06" y="3.1" width="3.9" height="4" fill="#a8a8ff" stroke="#0000ff" stroke-width="1.3"/><rect x="13.4" y="0.9" width="2.7" height="2.7" fill="#9a9aff" stroke="#5a5aff" stroke-width="0.9"/><rect x="0.9" y="13.6" width="2.7" height="2.7" fill="#9a9aff" stroke="#5a5aff" stroke-width="0.9"/><path d="M6.8,6.9 L14.6,12.2 L11.1,14.9 Z" fill="#000"/></g>
<g transform="translate(7.5,182.7)"><rect x="1.6" y="1.6" width="12.8" height="12.8" rx="0.8" fill="url(#gBlue)" stroke="#222" stroke-width="1.2"/></g>
<g transform="translate(7.5,214.8)"><circle cx="8" cy="8" r="6.7" fill="url(#gPink)" stroke="#222" stroke-width="1.2"/></g>
<g transform="translate(7.5,247.4)"><path d="M4.6,0.6 L9,3 L8.4,8.4 L3.2,9.8 L0.4,5.2 Z" fill="#f6eea0" stroke="#3a3a2a" stroke-width="0.9" stroke-linejoin="round"/><path d="M11.00,3.90 L12.41,7.46 L16.23,7.70 L13.28,10.14 L14.23,13.85 L11.00,11.80 L7.77,13.85 L8.72,10.14 L5.77,7.70 L9.59,7.46 Z" fill="#f7ec86" stroke="#3a3a2a" stroke-width="0.9" stroke-linejoin="round"/></g>
<g transform="translate(7.5,279)"><path d="M8,0.8 L15,4.6 L14.8,11.8 L8,15.4 L1.2,11.6 L1.2,4.2 Z" fill="#a9aadf"/><path d="M8,0.8 L15,4.6 L14.8,11.8 L8.6,9.6 Z" fill="#e2e3f8"/><path d="M1.2,11.6 L8.6,9.6 L14.8,11.8 L8,15.4 Z" fill="#4a4aa6"/><path d="M8,0.8 L1.2,4.2 L1.2,11.6 L8.6,9.6 Z" fill="#8f91d2"/><path d="M8,0.8 L15,4.6 L14.8,11.8 L8,15.4 L1.2,11.6 L1.2,4.2 Z" fill="none" stroke="#6a6a7a" stroke-width="0.7"/></g>
<g transform="translate(7.5,311)"><path d="M7.10,8.20 L7.04,8.01 L7.03,7.79 L7.06,7.56 L7.15,7.33 L7.30,7.11 L7.50,6.92 L7.75,6.77 L8.04,6.67 L8.36,6.64 L8.70,6.67 L9.04,6.78 L9.36,6.96 L9.64,7.21 L9.88,7.53 L10.05,7.91 L10.15,8.33 L10.16,8.77 L10.07,9.22 L9.89,9.66 L9.61,10.07 L9.25,10.42 L8.81,10.70 L8.30,10.89 L7.76,10.97 L7.19,10.94 L6.62,10.79 L6.09,10.53 L5.60,10.15 L5.19,9.67 L4.88,9.11 L4.68,8.48 L4.62,7.80 L4.69,7.11 L4.90,6.44 L5.25,5.81 L5.74,5.25 L6.33,4.79 L7.03,4.45 L7.79,4.25 L8.59,4.21 L9.39,4.33 L10.18,4.62 L10.90,5.06 L11.53,5.66 L12.03,6.38 L12.39,7.20 L12.58,8.09 L12.59,9.01 L12.41,9.94 L12.04,10.82 L11.50,11.63 L10.79,12.32 L9.95,12.86 L9.00,13.23 L7.98,13.41 L6.93,13.38 L5.89,13.13 L4.91,12.68 L4.02,12.03 L3.27,11.21 L2.70,10.23 L2.32,9.15 L2.17,8.00 L2.25,6.83 L2.56,5.68 L3.11,4.61 L3.87,3.65 L4.81,2.85 L5.91,2.25 L7.13,1.88 L8.41,1.75 L9.70,1.88 L10.96,2.28 L12.12,2.92 L13.15,3.79 L13.99,4.87 L14.61,6.10 L14.97,7.44 L15.06,8.85 L14.86,10.26 L14.39,11.62" fill="none" stroke="#333" stroke-width="0.95"/></g>
<g transform="translate(7.5,344)"><path d="M1.5,1 H9.5" stroke="#333" stroke-width="1.1"/><path d="M9.2,1.2 Q5,6 3.5,13" fill="none" stroke="#333" stroke-width="1"/><rect x="0.8" y="12" width="3" height="3" fill="#fff" stroke="#111" stroke-width="0.9"/><path d="M3.8,14 H8" stroke="#111" stroke-width="1"/><path d="M8,14.5 L10.2,8.6 L13.6,10.6 Z" fill="#fff" stroke="#111" stroke-width="0.9"/><path d="M10.2,8.6 L11.2,6.8 L14.6,8.8 L13.6,10.6 Z" fill="#f2c12e" stroke="#222" stroke-width="0.7"/><path d="M11.2,6.8 L14.2,1.2 Q15.5,0.2 16.5,1.2 Q17.2,2.2 16.8,3.4 L14.6,8.8 Z" fill="#7db0dc" stroke="#1d2a3a" stroke-width="0.9"/></g>
<g transform="translate(7.5,376)"><path d="M2,2.5 Q3.5,0.5 4.5,2 Q5,3.5 2.5,6.5 H5.2" fill="none" stroke="#333" stroke-width="0.9"/><path d="M3,8 Q1.5,11 4,13 Q7,15.5 11,14.5 Q13,14 12.5,12.5" fill="none" stroke="#111" stroke-width="1.1"/><path d="M7.5,13 L8.2,9.5 L11,11.6 Z" fill="#fff" stroke="#111" stroke-width="0.8"/><path d="M8.2,9.5 L12.5,2.5 L15.5,4.8 L11,11.6 Z" fill="#f4c21a" stroke="#222" stroke-width="0.9"/><path d="M12.5,2.5 L14,0.8 Q15.5,0.5 16,2 L15.5,4.8 Z" fill="#e8a000" stroke="#222" stroke-width="0.7"/><path d="M12.8,4.5 L15,6.2" stroke="#d33" stroke-width="0.8"/></g>
<g transform="translate(7.5,408)"><path d="M3.5,1.5 Q0,5 1.5,10 Q3,14.5 7,15 L15,15.2 Q11,14.8 8,13.2 Q5,11 4.8,7 Q4.8,3.5 6.5,1.8 Z" fill="#111"/><path d="M8,13.2 L9,9.2 L12.2,11.4 Z" fill="#fff" stroke="#111" stroke-width="0.8"/><path d="M9,9.2 L12,4.2 L15.2,6.4 L12.2,11.4 Z" fill="#f4c21a" stroke="#222" stroke-width="0.9"/><path d="M12,4.2 L13.5,1.5 L16.5,3.5 L15.2,6.4 Z" fill="#7db0dc" stroke="#222" stroke-width="0.8"/><path d="M11.5,5 L15,7.4" stroke="#d00" stroke-width="1.1"/></g>
<g transform="translate(7.5,440)"><path d="M0.5,14.5 L5.2,1.5 H8.6 L13.3,14.5 H9.9 L9,11.6 H4.6 L3.7,14.5 Z M5.4,9 H8.2 L6.8,4.6 Z" fill="#000" fill-rule="evenodd"/><path d="M13,1.5 H15.5 M14.25,1.5 V14.5 M13,14.5 H15.5" stroke="#333" stroke-width="0.8"/></g>
<g transform="translate(7.5,473)"><rect x="0.5" y="0.5" width="15" height="15" rx="1.5" fill="url(#gGreen)"/><path d="M4,3.5 L12,11" stroke="#222" stroke-width="0.9"/><rect x="2" y="1.5" width="3.5" height="3.5" fill="#fff" stroke="#222" stroke-width="0.9"/><rect x="10.5" y="9.8" width="3.5" height="3.5" fill="#fff" stroke="#222" stroke-width="0.9"/></g>
<g transform="translate(7.5,505)"><path d="M3,3 L13,2 L14,12 L3.5,13.5 Z" fill="url(#gGreen2)" stroke="#333" stroke-width="0.8"/><rect x="1.3" y="1.3" width="3.4" height="3.4" rx="1.2" fill="#fff" stroke="#111" stroke-width="1"/><rect x="11.3" y="0.3" width="3.4" height="3.4" rx="1.2" fill="#fff" stroke="#111" stroke-width="1"/><rect x="12.3" y="10.3" width="3.4" height="3.4" rx="1.2" fill="#fff" stroke="#111" stroke-width="1"/><rect x="1.8" y="11.8" width="3.4" height="3.4" rx="1.2" fill="#fff" stroke="#111" stroke-width="1"/></g>
<g transform="translate(7.5,537)"><path d="M11,1.5 Q13,0 14.5,1.5 Q16,3 14.5,5 L12.5,7 L9,3.5 Z" fill="#111"/><path d="M9.5,5 L3,11.5 L2.5,13.5 L4.5,13 L11,6.5 Z" fill="#a6c4e0" stroke="#333" stroke-width="0.8"/><circle cx="2.3" cy="14.6" r="1.3" fill="#5c8ec8"/></g>
<g transform="translate(7.5,569)"><ellipse cx="8" cy="14" rx="7" ry="1.8" fill="#52c05a" stroke="#2b7a30" stroke-width="0.7"/><path d="M4,5 Q3,9 4,13 L5.5,13.5 L5.5,9" fill="#4cb552" stroke="#2b7a30" stroke-width="0.7"/><path d="M5,3.5 L12.5,1.2 L15.2,8.6 L8.8,11.6 Z" fill="#7db3dc" stroke="#223" stroke-width="0.9"/><ellipse cx="8.8" cy="4.8" rx="3.6" ry="2.4" transform="rotate(-25 8.8 4.8)" fill="#c7e0f4" stroke="#223" stroke-width="0.8"/></g>
<g transform="translate(7.5,602)"><rect x="1" y="10" width="14" height="5.5" fill="url(#gGreyFade)" opacity="0.85"/><path d="M3,10.5 Q5,7 7,6 Q5,9 7,10.5 Q8,6 10,3.5 Q12,1.5 13.5,3 Q12,3 11,4.5 Q12,6 13,5 Q12.5,7.5 10,7 Q9,9 10,10.5" fill="#6b6b6b" stroke="#333" stroke-width="0.7"/></g>
<g transform="translate(7.5,634)"><path d="M6.5,8 L11.5,5 L15,13 L10,15.5 Z" fill="#58b848" stroke="#214a1a" stroke-width="0.8"/><rect x="8.5" y="3.5" width="3" height="3" fill="#f6f6f6" stroke="#333" stroke-width="0.7" transform="rotate(-30 10 5)"/><circle cx="2" cy="4" r="0.8" fill="#333"/><circle cx="4.5" cy="2.5" r="0.8" fill="#333"/><circle cx="1.5" cy="7" r="0.8" fill="#333"/><circle cx="4" cy="5.5" r="0.8" fill="#333"/><circle cx="6.5" cy="1" r="0.7" fill="#333"/><circle cx="3.5" cy="8.8" r="0.7" fill="#333"/></g>
<g transform="translate(7.5,666)"><path d="M0.5,15 H5.5 M10.5,15 H16" stroke="#8a8a8a" stroke-width="1.3"/><path d="M10.2,0.6 L16,3.6 L11.2,13.6 L5.2,10.6 Z" fill="#eea98f" stroke="#333" stroke-width="0.9" stroke-linejoin="round"/><path d="M7.4,6.2 L13.4,9.1 L11.2,13.6 L5.2,10.6 Z" fill="#2b2be6" stroke="#222" stroke-width="0.9" stroke-linejoin="round"/></g>
<g transform="translate(7.5,698)"><path d="M5.5,5 H9.5 L12,8.5 M4,7 V10 H12 V12" fill="none" stroke="#888" stroke-width="1.4"/><rect x="2.5" y="1" width="6" height="5" fill="#a9c9e8" stroke="#555" stroke-width="0.8"/><rect x="5.5" y="8" width="6" height="3" fill="#f5d24a" stroke="#555" stroke-width="0.8"/><rect x="0.8" y="11" width="5" height="4.5" fill="#a9c9e8" stroke="#555" stroke-width="0.8"/><rect x="10" y="11" width="5" height="4.5" fill="#a9c9e8" stroke="#555" stroke-width="0.8"/></g>
<g transform="translate(7.5,731)"><path d="M1.5,4.2 L6.2,1 L14.5,12 L9.8,15.2 Z" fill="#f2c3a6" stroke="#444" stroke-width="0.9"/><path d="M4.5,4 L6,3 M6,6 L8,4.6 M7.5,8 L9,7 M9,10 L11,8.6 M10.5,12 L12,11" stroke="#555" stroke-width="0.8"/></g>
<g transform="translate(7.5,763)"><path d="M10,10 L14.5,14.5" stroke="#c98a00" stroke-width="3.2" stroke-linecap="round"/><path d="M10,10 L14.5,14.5" stroke="#f5b000" stroke-width="2" stroke-linecap="round"/><circle cx="6.3" cy="6.3" r="5.4" fill="url(#gLens)" stroke="#333" stroke-width="1.1"/></g>
<g transform="translate(7.5,795)"><path d="M5.5,1 H12.5 L14.5,3 V12 H5.5 Z" fill="#fff" stroke="#111" stroke-width="1.1"/><path d="M1.5,4 H8.5 L10.5,6 V15 H1.5 Z" fill="url(#gDoc)" stroke="#111" stroke-width="1.1"/></g>
<g transform="translate(36,114)"><path d="M4,8 V5.5 Q4,1.8 7.5,1.8 Q11,1.8 11,5.5 V8" fill="none" stroke="#111" stroke-width="1.4"/><rect x="1.8" y="7.5" width="11.4" height="8" rx="1" fill="url(#gGold)" stroke="#222" stroke-width="1"/><circle cx="7.5" cy="10.6" r="1" fill="#111"/><rect x="6.9" y="10.6" width="1.2" height="2.6" fill="#111"/></g>
<defs><linearGradient id="gTriA" x1="0" y1="0" x2="0" y2="1"><stop offset="0" stop-color="#00f030"/><stop offset="0.55" stop-color="#00d8e8"/><stop offset="1" stop-color="#2020ff"/></linearGradient><linearGradient id="gTriB" x1="0" y1="0" x2="1" y2="0"><stop offset="0.45" stop-color="#ff0060" stop-opacity="0"/><stop offset="1" stop-color="#ff0030" stop-opacity="1"/></linearGradient><radialGradient id="gTriC" cx="0.45" cy="0.62" r="0.3"><stop offset="0" stop-color="#ffffff" stop-opacity="0.9"/><stop offset="1" stop-color="#ffffff" stop-opacity="0"/></radialGradient></defs>
<path d="M1472.3,925.3 L1486,935.5 L1475.2,940.7 Z" fill="url(#gTriA)"/>
<path d="M1472.3,925.3 L1486,935.5 L1475.2,940.7 Z" fill="url(#gTriB)"/>
<path d="M1472.3,925.3 L1486,935.5 L1475.2,940.7 Z" fill="url(#gTriC)" stroke="#1a1a1a" stroke-width="0.7" stroke-linejoin="round"/>
<path d="M396.2,994.6 Q404.2,986.6 412.2,994.6 Q404.2,1001.8 396.2,994.6 Z" fill="#fff" stroke="#000" stroke-width="1.3"/><circle cx="404.2" cy="994" r="2.9" fill="#000"/><circle cx="403.2" cy="993" r="0.8" fill="#fff"/><path d="M397.6,991.6 L396,989.2 M400.4,989.6 L399.8,986.4 M404.4,989 V985.4 M408,989.6 L409.2,986.4 M411,991.6 L412.6,989.2" stroke="#000" stroke-width="1.1"/>
<g transform="translate(-453,905)"><path d="M895.9,87.2 Q896.4,82.4 892.6,81.6 Q889.6,81.1 888.2,83" fill="none" stroke="#000" stroke-width="1.3"/><path d="M886.3,88.4 L896.1,86.6 L898.7,94.6 L888.2,96.7 Z" fill="url(#gLk)" stroke="#000" stroke-width="1.1" stroke-linejoin="round"/><path d="M891.6,90.2 L893.6,89.8 L893,91.6 L893.5,93.4 L892.2,93.6 L892.1,91.8 Z" fill="#000"/></g>
<g transform="translate(1521,125)"><rect x="0.2" y="0" width="1.2" height="16" fill="#d81e1e"/><rect x="2.5" y="0.8" width="5.5" height="3.4" rx="0.6" fill="url(#gBlue2)" stroke="#000" stroke-width="1"/><rect x="2.5" y="6.2" width="13" height="3.4" rx="0.6" fill="url(#gBlue2)" stroke="#000" stroke-width="1"/><rect x="2.5" y="11.6" width="10" height="3.4" rx="0.6" fill="url(#gBlue2)" stroke="#000" stroke-width="1"/></g>
<g transform="translate(1516.5,160)"><rect x="0.2" y="0" width="1.2" height="16" fill="#e07070"/><rect x="2" y="0.8" width="5" height="3.2" fill="url(#gBlue2)" stroke="#333" stroke-width="0.9"/><rect x="2" y="6.2" width="12" height="3.2" fill="url(#gBlue2)" stroke="#333" stroke-width="0.9"/><rect x="2" y="11.6" width="9" height="3.2" fill="url(#gBlue2)" stroke="#333" stroke-width="0.9"/></g>
<rect x="1612.60" y="161.70" width="2.75" height="2.75" rx="0.5" fill="#0a0a0a"/><rect x="1612.60" y="164.85" width="2.75" height="2.75" rx="0.5" fill="#0a0a0a"/><rect x="1612.60" y="168.00" width="2.75" height="2.75" rx="0.5" fill="#0a0a0a"/><rect x="1612.60" y="171.15" width="2.75" height="2.75" rx="0.5" fill="#0a0a0a"/><rect x="1615.75" y="161.70" width="2.75" height="2.75" rx="0.5" fill="#0a0a0a"/><rect x="1615.75" y="164.85" width="2.75" height="2.75" rx="0.5" fill="#0a0a0a"/><rect x="1615.75" y="168.00" width="2.75" height="2.75" rx="0.5" fill="#0a0a0a"/><rect x="1615.75" y="171.15" width="2.75" height="2.75" rx="0.5" fill="#0a0a0a"/><rect x="1618.90" y="161.70" width="2.75" height="2.75" rx="0.5" fill="#0a0a0a"/><rect x="1618.90" y="164.85" width="2.75" height="2.75" rx="0.5" fill="#0a0a0a"/><rect x="1618.90" y="168.00" width="2.75" height="2.75" rx="0.5" fill="#0a0a0a"/><rect x="1618.90" y="171.15" width="2.75" height="2.75" rx="0.5" fill="#0a0a0a"/><rect x="1622.05" y="161.70" width="2.75" height="2.75" rx="0.5" fill="#0a0a0a"/><rect x="1622.05" y="164.85" width="2.75" height="2.75" rx="0.5" fill="#0a0a0a"/><rect x="1622.05" y="168.00" width="2.75" height="2.75" rx="0.5" fill="#0a0a0a"/><rect x="1622.05" y="171.15" width="2.75" height="2.75" rx="0.5" fill="#0a0a0a"/>
<circle cx="1695.8" cy="167.8" r="5.2" fill="none" stroke="#666" stroke-width="0.8"/><circle cx="1701.00" cy="167.80" r="2.15" fill="#0a0a0a"/><circle cx="1698.40" cy="172.30" r="2.15" fill="#0a0a0a"/><circle cx="1693.20" cy="172.30" r="2.15" fill="#0a0a0a"/><circle cx="1690.60" cy="167.80" r="2.15" fill="#0a0a0a"/><circle cx="1693.20" cy="163.30" r="2.15" fill="#0a0a0a"/><circle cx="1698.40" cy="163.30" r="2.15" fill="#0a0a0a"/></svg></body></html>
